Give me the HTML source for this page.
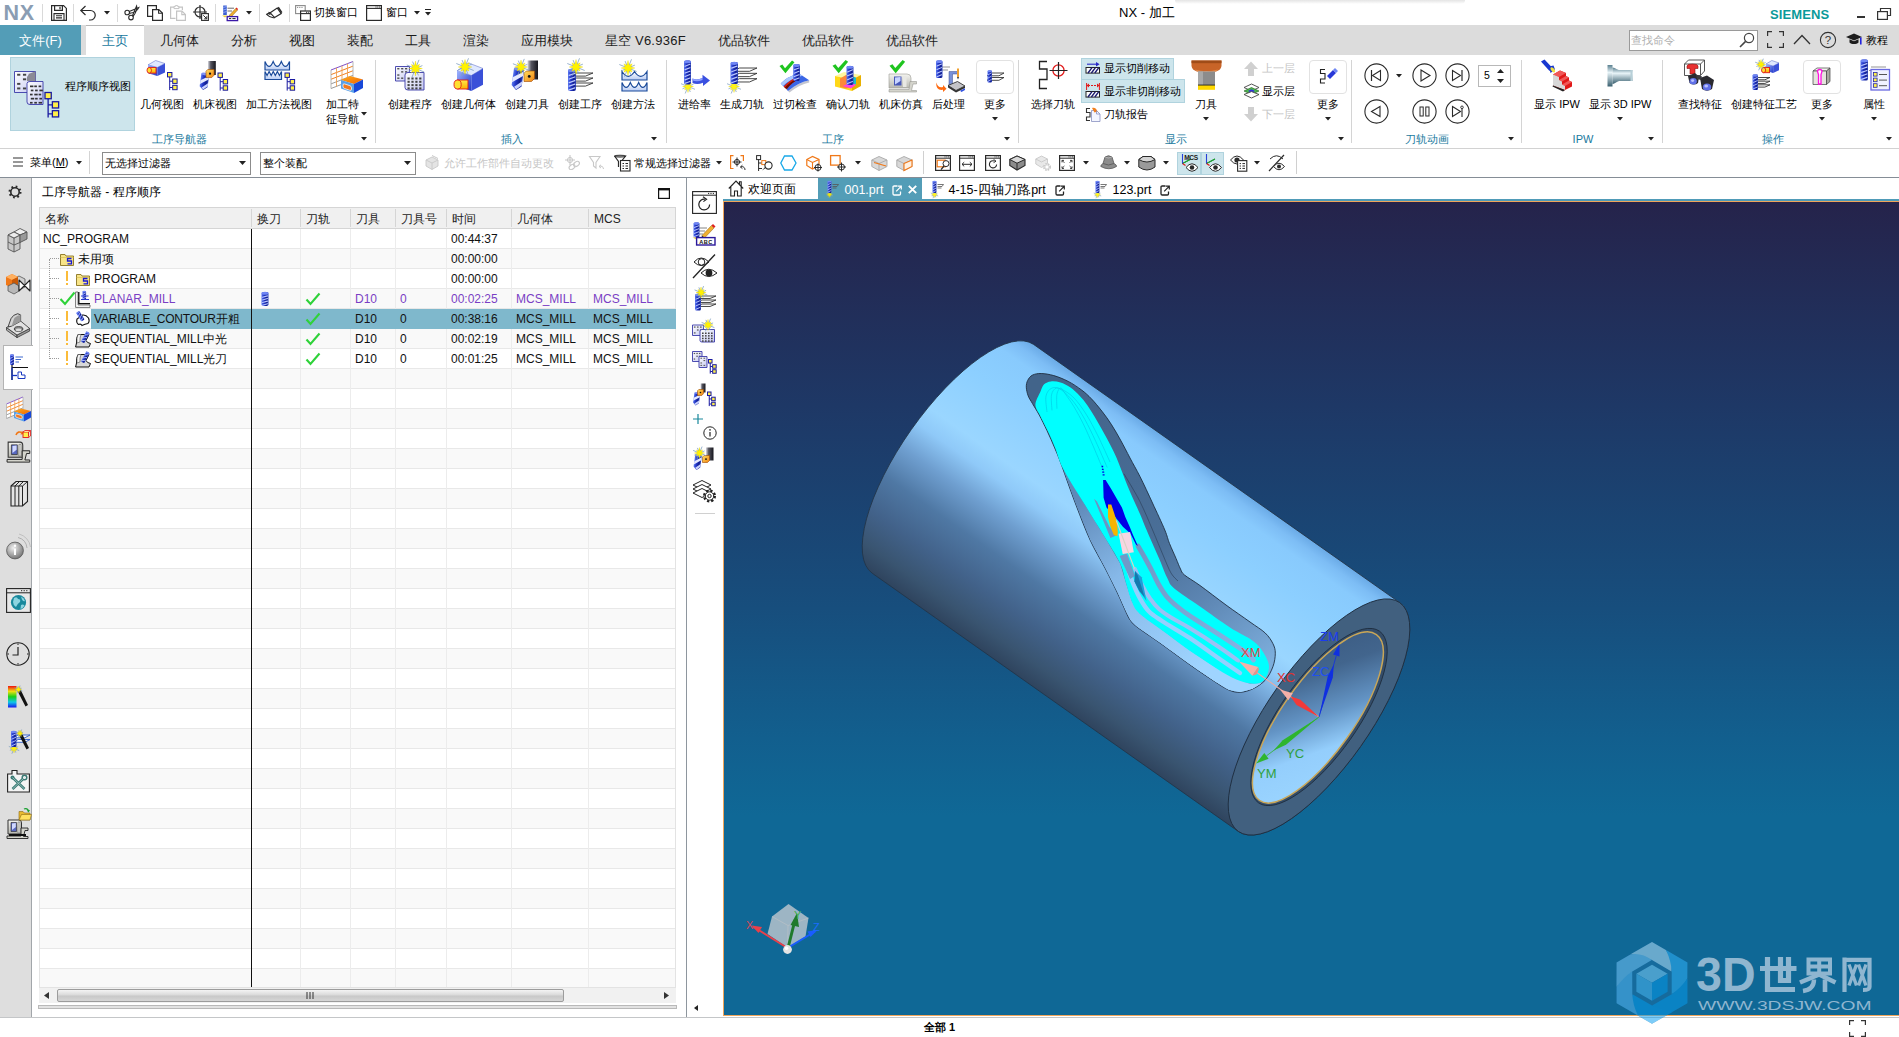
<!DOCTYPE html>
<html lang="zh"><head><meta charset="utf-8"><title>NX - 加工</title>
<style>
*{box-sizing:border-box;margin:0;padding:0}
html,body{width:1899px;height:1037px;overflow:hidden;background:#fff}
body{font-family:"Liberation Sans",sans-serif;font-size:12px;color:#000;position:relative}
.a{position:absolute}
.cj{display:inline-block;text-align:justify;text-align-last:justify;white-space:nowrap;vertical-align:top;height:100%}
svg{overflow:visible}
</style></head><body>
<div class="a" style="top:-0.25px;height:27px;line-height:27px;font-size:21.5px;color:#8a9db3;white-space:nowrap;font-weight:bold;letter-spacing:0.8px;left:3.5px;">NX</div>
<div class="a" style="left:42px;top:4px;width:1px;height:18px;background:#d9d9d9;"></div>
<div class="a" style="left:73px;top:4px;width:1px;height:18px;background:#d9d9d9;"></div>
<div class="a" style="left:117px;top:4px;width:1px;height:18px;background:#d9d9d9;"></div>
<div class="a" style="left:215px;top:4px;width:1px;height:18px;background:#d9d9d9;"></div>
<div class="a" style="left:259px;top:4px;width:1px;height:18px;background:#d9d9d9;"></div>
<div class="a" style="left:289px;top:4px;width:1px;height:18px;background:#d9d9d9;"></div>
<div class="a" style="top:4px;height:17px;line-height:17px;font-size:11px;color:#000;white-space:nowrap;left:314px;"><span class="cj" style="width:44px">切换窗口</span></div>
<div class="a" style="top:4px;height:17px;line-height:17px;font-size:11px;color:#000;white-space:nowrap;left:386px;"><span class="cj" style="width:22px">窗口</span></div>
<svg class="a" style="left:104px;top:11px;" width="6" height="3.5" viewBox="0 0 6 3.5"><path d="M0 0H6L3 3.5Z" fill="#222"/></svg>
<svg class="a" style="left:246px;top:11px;" width="6" height="3.5" viewBox="0 0 6 3.5"><path d="M0 0H6L3 3.5Z" fill="#222"/></svg>
<svg class="a" style="left:414px;top:11px;" width="6" height="3.5" viewBox="0 0 6 3.5"><path d="M0 0H6L3 3.5Z" fill="#222"/></svg>
<svg class="a" style="left:425px;top:12px;" width="6" height="3.5" viewBox="0 0 6 3.5"><path d="M0 0H6L3 3.5Z" fill="#222"/></svg>
<div class="a" style="left:425px;top:9px;width:6px;height:1px;background:#222;"></div>
<div class="a" style="top:3px;height:19px;line-height:19px;font-size:13px;color:#000;white-space:nowrap;left:1119px;">NX - <span class="cj" style="width:26px">加工</span></div>
<div class="a" style="left:1175px;top:0px;width:290px;height:4px;background:linear-gradient(#e4e4e4,#fff);border-radius:0 0 6px 6px;"></div>
<div class="a" style="top:4.5px;height:19px;line-height:19px;font-size:13px;color:#0a9a9a;white-space:nowrap;font-weight:bold;letter-spacing:0.1px;left:1770px;">SIEMENS</div>
<div class="a" style="left:1857px;top:16px;width:8px;height:2px;background:#333;"></div>
<svg class="a" style="left:1877px;top:7.5px;" width="14" height="12" viewBox="0 0 14 12"><path d="M3.5 3.5V0.5H13.5V7.5H10.5" fill="none" stroke="#333" stroke-width="1.2"/><rect x="0.6" y="3.6" width="9.8" height="7.8" fill="#fff" stroke="#333" stroke-width="1.2"/></svg>
<div class="a" style="left:0px;top:25px;width:1899px;height:30px;background:#dcdcdc;"></div>
<div class="a" style="left:0px;top:25px;width:81px;height:30px;background:#539db7;"></div>
<div class="a" style="top:30.5px;height:19px;line-height:19px;font-size:13px;color:#fff;white-space:nowrap;left:-159.5px;width:400px;text-align:center;"><span class="cj" style="width:26px">文件</span>(F)</div>
<div class="a" style="left:86px;top:25px;width:58px;height:31px;background:#fff;border-top:1px solid #b5b5b5;"></div>
<div class="a" style="top:30.5px;height:19px;line-height:19px;font-size:13px;color:#1a7a9e;white-space:nowrap;left:-85px;width:400px;text-align:center;"><span class="cj" style="width:26px">主页</span></div>
<div class="a" style="top:30.5px;height:19px;line-height:19px;font-size:13px;color:#1a1a1a;white-space:nowrap;left:-20.5px;width:400px;text-align:center;"><span class="cj" style="width:39px">几何体</span></div>
<div class="a" style="top:30.5px;height:19px;line-height:19px;font-size:13px;color:#1a1a1a;white-space:nowrap;left:44px;width:400px;text-align:center;"><span class="cj" style="width:26px">分析</span></div>
<div class="a" style="top:30.5px;height:19px;line-height:19px;font-size:13px;color:#1a1a1a;white-space:nowrap;left:102px;width:400px;text-align:center;"><span class="cj" style="width:26px">视图</span></div>
<div class="a" style="top:30.5px;height:19px;line-height:19px;font-size:13px;color:#1a1a1a;white-space:nowrap;left:160px;width:400px;text-align:center;"><span class="cj" style="width:26px">装配</span></div>
<div class="a" style="top:30.5px;height:19px;line-height:19px;font-size:13px;color:#1a1a1a;white-space:nowrap;left:218px;width:400px;text-align:center;"><span class="cj" style="width:26px">工具</span></div>
<div class="a" style="top:30.5px;height:19px;line-height:19px;font-size:13px;color:#1a1a1a;white-space:nowrap;left:276px;width:400px;text-align:center;"><span class="cj" style="width:26px">渲染</span></div>
<div class="a" style="top:30.5px;height:19px;line-height:19px;font-size:13px;color:#1a1a1a;white-space:nowrap;left:347px;width:400px;text-align:center;"><span class="cj" style="width:52px">应用模块</span></div>
<div class="a" style="top:30.5px;height:19px;line-height:19px;font-size:13px;color:#1a1a1a;white-space:nowrap;letter-spacing:0.25px;left:445.5px;width:400px;text-align:center;"><span class="cj" style="width:26px">星空</span> V6.936F</div>
<div class="a" style="top:30.5px;height:19px;line-height:19px;font-size:13px;color:#1a1a1a;white-space:nowrap;left:544px;width:400px;text-align:center;"><span class="cj" style="width:52px">优品软件</span></div>
<div class="a" style="top:30.5px;height:19px;line-height:19px;font-size:13px;color:#1a1a1a;white-space:nowrap;left:628px;width:400px;text-align:center;"><span class="cj" style="width:52px">优品软件</span></div>
<div class="a" style="top:30.5px;height:19px;line-height:19px;font-size:13px;color:#1a1a1a;white-space:nowrap;left:712px;width:400px;text-align:center;"><span class="cj" style="width:52px">优品软件</span></div>
<div class="a" style="left:1629px;top:29.5px;width:129px;height:21px;background:#fff;border:1px solid #9a9a9a;"></div>
<div class="a" style="top:31.5px;height:17px;line-height:17px;font-size:11px;color:#b0b0b0;white-space:nowrap;left:1631px;"><span class="cj" style="width:44px">查找命令</span></div>
<svg class="a" style="left:1738px;top:31px;" width="18" height="18" viewBox="0 0 18 18"><circle cx="11" cy="7" r="4.6" fill="none" stroke="#444" stroke-width="1.2"/><path d="M7.6 10.4L2 16" stroke="#444" stroke-width="1.6"/></svg>
<svg class="a" style="left:1767px;top:31px;" width="17" height="17" viewBox="0 0 17 17"><path d="M0.6 5V0.6H5M12 0.6H16.4V5M16.4 12V16.4H12M5 16.4H0.6V12" fill="none" stroke="#333" stroke-width="1.2"/></svg>
<svg class="a" style="left:1793px;top:34px;" width="18" height="11" viewBox="0 0 18 11"><path d="M1 10L9 1.5L17 10" fill="none" stroke="#333" stroke-width="1.3"/></svg>
<svg class="a" style="left:1819px;top:31px;" width="18" height="18" viewBox="0 0 18 18"><circle cx="9" cy="9" r="7.6" fill="none" stroke="#333" stroke-width="1.1"/><text x="9" y="13.2" font-size="11.5" text-anchor="middle" font-family="Liberation Sans" fill="#333">?</text></svg>
<svg class="a" style="left:1846px;top:33px;" width="17" height="13" viewBox="0 0 17 13"><path d="M0 4L8 0.5L16 4L8 7.5Z" fill="#1d1d1d"/><path d="M3.5 6.2V9.5C5.5 11.6 10.5 11.6 12.5 9.5V6.2L8 8.3Z" fill="#1d1d1d"/><path d="M14.8 4.6V11.5" stroke="#2222dd" stroke-width="1.6"/></svg>
<div class="a" style="top:31.5px;height:17px;line-height:17px;font-size:11px;color:#000;white-space:nowrap;left:1866px;"><span class="cj" style="width:22px">教程</span></div>
<div class="a" style="left:0px;top:148px;width:1899px;height:1px;background:#d2d2d2;"></div>
<div class="a" style="left:375px;top:60px;width:1px;height:83px;background:#d4d4d4;"></div>
<div class="a" style="left:666px;top:60px;width:1px;height:83px;background:#d4d4d4;"></div>
<div class="a" style="left:1018px;top:60px;width:1px;height:83px;background:#d4d4d4;"></div>
<div class="a" style="left:1351px;top:60px;width:1px;height:83px;background:#d4d4d4;"></div>
<div class="a" style="left:1521px;top:60px;width:1px;height:83px;background:#d4d4d4;"></div>
<div class="a" style="left:1662px;top:60px;width:1px;height:83px;background:#d4d4d4;"></div>
<div class="a" style="top:130.5px;height:17px;line-height:17px;font-size:11px;color:#1a7a9e;white-space:nowrap;left:-20.5px;width:400px;text-align:center;"><span class="cj" style="width:55px">工序导航器</span></div>
<svg class="a" style="left:361px;top:137px;" width="6" height="3.5" viewBox="0 0 6 3.5"><path d="M0 0H6L3 3.5Z" fill="#222"/></svg>
<div class="a" style="top:130.5px;height:17px;line-height:17px;font-size:11px;color:#1a7a9e;white-space:nowrap;left:312px;width:400px;text-align:center;"><span class="cj" style="width:22px">插入</span></div>
<svg class="a" style="left:651px;top:137px;" width="6" height="3.5" viewBox="0 0 6 3.5"><path d="M0 0H6L3 3.5Z" fill="#222"/></svg>
<div class="a" style="top:130.5px;height:17px;line-height:17px;font-size:11px;color:#1a7a9e;white-space:nowrap;left:633px;width:400px;text-align:center;"><span class="cj" style="width:22px">工序</span></div>
<svg class="a" style="left:1004px;top:137px;" width="6" height="3.5" viewBox="0 0 6 3.5"><path d="M0 0H6L3 3.5Z" fill="#222"/></svg>
<div class="a" style="top:130.5px;height:17px;line-height:17px;font-size:11px;color:#1a7a9e;white-space:nowrap;left:976px;width:400px;text-align:center;"><span class="cj" style="width:22px">显示</span></div>
<svg class="a" style="left:1337.5px;top:137px;" width="6" height="3.5" viewBox="0 0 6 3.5"><path d="M0 0H6L3 3.5Z" fill="#222"/></svg>
<div class="a" style="top:130.5px;height:17px;line-height:17px;font-size:11px;color:#1a7a9e;white-space:nowrap;left:1227px;width:400px;text-align:center;"><span class="cj" style="width:44px">刀轨动画</span></div>
<svg class="a" style="left:1507.5px;top:137px;" width="6" height="3.5" viewBox="0 0 6 3.5"><path d="M0 0H6L3 3.5Z" fill="#222"/></svg>
<div class="a" style="top:130.5px;height:17px;line-height:17px;font-size:11px;color:#1a7a9e;white-space:nowrap;left:1383px;width:400px;text-align:center;">IPW</div>
<svg class="a" style="left:1648px;top:137px;" width="6" height="3.5" viewBox="0 0 6 3.5"><path d="M0 0H6L3 3.5Z" fill="#222"/></svg>
<div class="a" style="top:130.5px;height:17px;line-height:17px;font-size:11px;color:#1a7a9e;white-space:nowrap;left:1573px;width:400px;text-align:center;"><span class="cj" style="width:22px">操作</span></div>
<svg class="a" style="left:1886px;top:137px;" width="6" height="3.5" viewBox="0 0 6 3.5"><path d="M0 0H6L3 3.5Z" fill="#222"/></svg>
<div class="a" style="left:10px;top:57px;width:125px;height:74px;background:#cde5ec;border:1px solid #b0d3de;"></div>
<div class="a" style="top:77.5px;height:17px;line-height:17px;font-size:11px;color:#000;white-space:nowrap;left:65px;"><span class="cj" style="width:66px">程序顺序视图</span></div>
<div class="a" style="top:95.5px;height:17px;line-height:17px;font-size:11px;color:#000;white-space:nowrap;left:-38px;width:400px;text-align:center;"><span class="cj" style="width:44px">几何视图</span></div>
<div class="a" style="top:95.5px;height:17px;line-height:17px;font-size:11px;color:#000;white-space:nowrap;left:15px;width:400px;text-align:center;"><span class="cj" style="width:44px">机床视图</span></div>
<div class="a" style="top:95.5px;height:17px;line-height:17px;font-size:11px;color:#000;white-space:nowrap;left:79px;width:400px;text-align:center;"><span class="cj" style="width:66px">加工方法视图</span></div>
<div class="a" style="top:95.5px;height:17px;line-height:17px;font-size:11px;color:#000;white-space:nowrap;left:210px;width:400px;text-align:center;"><span class="cj" style="width:44px">创建程序</span></div>
<div class="a" style="top:95.5px;height:17px;line-height:17px;font-size:11px;color:#000;white-space:nowrap;left:268.5px;width:400px;text-align:center;"><span class="cj" style="width:55px">创建几何体</span></div>
<div class="a" style="top:95.5px;height:17px;line-height:17px;font-size:11px;color:#000;white-space:nowrap;left:327px;width:400px;text-align:center;"><span class="cj" style="width:44px">创建刀具</span></div>
<div class="a" style="top:95.5px;height:17px;line-height:17px;font-size:11px;color:#000;white-space:nowrap;left:380px;width:400px;text-align:center;"><span class="cj" style="width:44px">创建工序</span></div>
<div class="a" style="top:95.5px;height:17px;line-height:17px;font-size:11px;color:#000;white-space:nowrap;left:433px;width:400px;text-align:center;"><span class="cj" style="width:44px">创建方法</span></div>
<div class="a" style="top:95.5px;height:17px;line-height:17px;font-size:11px;color:#000;white-space:nowrap;left:494.5px;width:400px;text-align:center;"><span class="cj" style="width:33px">进给率</span></div>
<div class="a" style="top:95.5px;height:17px;line-height:17px;font-size:11px;color:#000;white-space:nowrap;left:542px;width:400px;text-align:center;"><span class="cj" style="width:44px">生成刀轨</span></div>
<div class="a" style="top:95.5px;height:17px;line-height:17px;font-size:11px;color:#000;white-space:nowrap;left:595px;width:400px;text-align:center;"><span class="cj" style="width:44px">过切检查</span></div>
<div class="a" style="top:95.5px;height:17px;line-height:17px;font-size:11px;color:#000;white-space:nowrap;left:648px;width:400px;text-align:center;"><span class="cj" style="width:44px">确认刀轨</span></div>
<div class="a" style="top:95.5px;height:17px;line-height:17px;font-size:11px;color:#000;white-space:nowrap;left:701px;width:400px;text-align:center;"><span class="cj" style="width:44px">机床仿真</span></div>
<div class="a" style="top:95.5px;height:17px;line-height:17px;font-size:11px;color:#000;white-space:nowrap;left:748.5px;width:400px;text-align:center;"><span class="cj" style="width:33px">后处理</span></div>
<div class="a" style="top:95.5px;height:17px;line-height:17px;font-size:11px;color:#000;white-space:nowrap;left:795px;width:400px;text-align:center;"><span class="cj" style="width:22px">更多</span></div>
<div class="a" style="top:95.5px;height:17px;line-height:17px;font-size:11px;color:#000;white-space:nowrap;left:853px;width:400px;text-align:center;"><span class="cj" style="width:44px">选择刀轨</span></div>
<div class="a" style="top:95.5px;height:17px;line-height:17px;font-size:11px;color:#000;white-space:nowrap;left:1006px;width:400px;text-align:center;"><span class="cj" style="width:22px">刀具</span></div>
<div class="a" style="top:95.5px;height:17px;line-height:17px;font-size:11px;color:#000;white-space:nowrap;left:1128px;width:400px;text-align:center;"><span class="cj" style="width:22px">更多</span></div>
<div class="a" style="top:95.5px;height:17px;line-height:17px;font-size:11px;color:#000;white-space:nowrap;left:1357px;width:400px;text-align:center;"><span class="cj" style="width:22px">显示</span> IPW</div>
<div class="a" style="top:95.5px;height:17px;line-height:17px;font-size:11px;color:#000;white-space:nowrap;left:1420px;width:400px;text-align:center;"><span class="cj" style="width:22px">显示</span> 3D IPW</div>
<div class="a" style="top:95.5px;height:17px;line-height:17px;font-size:11px;color:#000;white-space:nowrap;left:1500px;width:400px;text-align:center;"><span class="cj" style="width:44px">查找特征</span></div>
<div class="a" style="top:95.5px;height:17px;line-height:17px;font-size:11px;color:#000;white-space:nowrap;left:1564px;width:400px;text-align:center;"><span class="cj" style="width:66px">创建特征工艺</span></div>
<div class="a" style="top:95.5px;height:17px;line-height:17px;font-size:11px;color:#000;white-space:nowrap;left:1622px;width:400px;text-align:center;"><span class="cj" style="width:22px">更多</span></div>
<div class="a" style="top:95.5px;height:17px;line-height:17px;font-size:11px;color:#000;white-space:nowrap;left:1674px;width:400px;text-align:center;"><span class="cj" style="width:22px">属性</span></div>
<div class="a" style="top:95.5px;height:17px;line-height:17px;font-size:11px;color:#000;white-space:nowrap;left:142.5px;width:400px;text-align:center;"><span class="cj" style="width:33px">加工特</span></div>
<div class="a" style="top:110.5px;height:17px;line-height:17px;font-size:11px;color:#000;white-space:nowrap;left:142.5px;width:400px;text-align:center;"><span class="cj" style="width:33px">征导航</span></div>
<svg class="a" style="left:361px;top:112px;" width="6" height="3.5" viewBox="0 0 6 3.5"><path d="M0 0H6L3 3.5Z" fill="#222"/></svg>
<svg class="a" style="left:992px;top:117px;" width="6" height="3.5" viewBox="0 0 6 3.5"><path d="M0 0H6L3 3.5Z" fill="#222"/></svg>
<svg class="a" style="left:1203px;top:117px;" width="6" height="3.5" viewBox="0 0 6 3.5"><path d="M0 0H6L3 3.5Z" fill="#222"/></svg>
<svg class="a" style="left:1325px;top:117px;" width="6" height="3.5" viewBox="0 0 6 3.5"><path d="M0 0H6L3 3.5Z" fill="#222"/></svg>
<svg class="a" style="left:1617px;top:117px;" width="6" height="3.5" viewBox="0 0 6 3.5"><path d="M0 0H6L3 3.5Z" fill="#222"/></svg>
<svg class="a" style="left:1819px;top:117px;" width="6" height="3.5" viewBox="0 0 6 3.5"><path d="M0 0H6L3 3.5Z" fill="#222"/></svg>
<svg class="a" style="left:1871px;top:117px;" width="6" height="3.5" viewBox="0 0 6 3.5"><path d="M0 0H6L3 3.5Z" fill="#222"/></svg>
<div class="a" style="left:976px;top:59.5px;width:37.5px;height:34px;border:1px solid #e2e2e2;border-radius:4px;"></div>
<div class="a" style="left:1309px;top:59.5px;width:37.5px;height:34px;border:1px solid #e2e2e2;border-radius:4px;"></div>
<div class="a" style="left:1803px;top:59.5px;width:37.5px;height:34px;border:1px solid #e2e2e2;border-radius:4px;"></div>
<div class="a" style="left:1081px;top:57.5px;width:93px;height:22px;background:#cde5ec;border:1px solid #b0d3de;"></div>
<div class="a" style="left:1081px;top:79px;width:104px;height:23.5px;background:#cde5ec;border:1px solid #b0d3de;"></div>
<div class="a" style="top:60px;height:17px;line-height:17px;font-size:11px;color:#000;white-space:nowrap;left:1104px;"><span class="cj" style="width:66px">显示切削移动</span></div>
<div class="a" style="top:82.5px;height:17px;line-height:17px;font-size:11px;color:#000;white-space:nowrap;left:1104px;"><span class="cj" style="width:77px">显示非切削移动</span></div>
<div class="a" style="top:105.5px;height:17px;line-height:17px;font-size:11px;color:#000;white-space:nowrap;left:1104px;"><span class="cj" style="width:44px">刀轨报告</span></div>
<div class="a" style="top:60px;height:17px;line-height:17px;font-size:11px;color:#c4c4c4;white-space:nowrap;left:1262px;"><span class="cj" style="width:33px">上一层</span></div>
<div class="a" style="top:82.5px;height:17px;line-height:17px;font-size:11px;color:#000;white-space:nowrap;left:1262px;"><span class="cj" style="width:33px">显示层</span></div>
<div class="a" style="top:105.5px;height:17px;line-height:17px;font-size:11px;color:#c4c4c4;white-space:nowrap;left:1262px;"><span class="cj" style="width:33px">下一层</span></div>
<div class="a" style="left:1478px;top:65px;width:33px;height:22px;background:#fff;border:1px solid #b8b8b8;"></div>
<div class="a" style="top:66.75px;height:16px;line-height:16px;font-size:10.5px;color:#000;white-space:nowrap;left:1484px;">5</div>
<svg class="a" style="left:1497px;top:69px;" width="7" height="14" viewBox="0 0 7 14"><path d="M0 4L3.5 0L7 4ZM0 10L3.5 14L7 10Z" fill="#222"/></svg>
<div class="a" style="left:0px;top:177px;width:1899px;height:1px;background:#858d96;"></div>
<svg class="a" style="left:13px;top:157px;" width="11" height="10" viewBox="0 0 11 10"><path d="M0 1H10M0 5H10M0 9H10" stroke="#333" stroke-width="1.1"/></svg>
<div class="a" style="left:30px;top:153px;height:18px;line-height:18px;font-size:11px;white-space:nowrap"><span class="cj" style="width:22px">菜单</span>(<u>M</u>)</div>
<svg class="a" style="left:75.5px;top:160.5px;" width="6" height="3.5" viewBox="0 0 6 3.5"><path d="M0 0H6L3 3.5Z" fill="#222"/></svg>
<div class="a" style="left:89px;top:151px;width:1px;height:23px;background:#d4d4d4;"></div>
<div class="a" style="left:102px;top:151.5px;width:149px;height:23px;background:#fff;border:1px solid #8c8c8c;"></div>
<div class="a" style="top:154.5px;height:17px;line-height:17px;font-size:11px;color:#000;white-space:nowrap;left:105px;"><span class="cj" style="width:66px">无选择过滤器</span></div>
<svg class="a" style="left:238.5px;top:161px;" width="7" height="4" viewBox="0 0 7 4"><path d="M0 0H7L3.5 4Z" fill="#222"/></svg>
<div class="a" style="left:260px;top:151.5px;width:156px;height:23px;background:#fff;border:1px solid #8c8c8c;"></div>
<div class="a" style="top:154.5px;height:17px;line-height:17px;font-size:11px;color:#000;white-space:nowrap;left:263px;"><span class="cj" style="width:44px">整个装配</span></div>
<svg class="a" style="left:403.5px;top:161px;" width="7" height="4" viewBox="0 0 7 4"><path d="M0 0H7L3.5 4Z" fill="#222"/></svg>
<div class="a" style="top:154.5px;height:17px;line-height:17px;font-size:11px;color:#c6c6c6;white-space:nowrap;left:444px;"><span class="cj" style="width:110px">允许工作部件自动更改</span></div>
<div class="a" style="top:154.5px;height:17px;line-height:17px;font-size:11px;color:#000;white-space:nowrap;left:634px;"><span class="cj" style="width:77px">常规选择过滤器</span></div>
<svg class="a" style="left:715.5px;top:161px;" width="6" height="3.5" viewBox="0 0 6 3.5"><path d="M0 0H6L3 3.5Z" fill="#222"/></svg>
<svg class="a" style="left:855px;top:161px;" width="6" height="3.5" viewBox="0 0 6 3.5"><path d="M0 0H6L3 3.5Z" fill="#222"/></svg>
<svg class="a" style="left:1083px;top:161px;" width="6" height="3.5" viewBox="0 0 6 3.5"><path d="M0 0H6L3 3.5Z" fill="#222"/></svg>
<svg class="a" style="left:1124px;top:161px;" width="6" height="3.5" viewBox="0 0 6 3.5"><path d="M0 0H6L3 3.5Z" fill="#222"/></svg>
<svg class="a" style="left:1163px;top:161px;" width="6" height="3.5" viewBox="0 0 6 3.5"><path d="M0 0H6L3 3.5Z" fill="#222"/></svg>
<svg class="a" style="left:1254px;top:161px;" width="6" height="3.5" viewBox="0 0 6 3.5"><path d="M0 0H6L3 3.5Z" fill="#222"/></svg>
<div class="a" style="left:922.5px;top:151px;width:1px;height:23px;background:#d0d0d0;"></div>
<div class="a" style="left:1296px;top:151px;width:1px;height:23px;background:#d0d0d0;"></div>
<div class="a" style="left:1177px;top:151.5px;width:23.5px;height:23px;background:#cde5ec;border:1px solid #b0d3de;"></div>
<div class="a" style="left:1200.5px;top:151.5px;width:23.5px;height:23px;background:#cde5ec;border:1px solid #b0d3de;"></div>
<div class="a" style="left:0px;top:178px;width:31px;height:838.5px;background:#dedede;"></div>
<div class="a" style="left:31px;top:178px;width:1px;height:838.5px;background:#a2a6aa;"></div>
<div class="a" style="left:3px;top:345px;width:29.5px;height:45px;background:#fff;border:1px solid #b4b4b4;border-right:none;"></div>
<div class="a" style="top:183px;height:18px;line-height:18px;font-size:12px;color:#000;white-space:nowrap;left:42px;"><span class="cj" style="width:60px">工序导航器</span> - <span class="cj" style="width:48px">程序顺序</span></div>
<svg class="a" style="left:658px;top:188px;" width="12" height="11" viewBox="0 0 12 11"><rect x="0.6" y="0.6" width="10.8" height="9.8" fill="#fff" stroke="#111" stroke-width="1.2"/><path d="M0 1.2H12" stroke="#111" stroke-width="2.4"/></svg>
<div class="a" style="left:39px;top:208px;width:637px;height:780px;background:#fff;border:1px solid #e3e3e3;border-top:none;"></div>
<div class="a" style="left:40px;top:248px;width:635px;height:20px;background:#f9f9f9;"></div>
<div class="a" style="left:40px;top:288px;width:635px;height:20px;background:#f9f9f9;"></div>
<div class="a" style="left:40px;top:328px;width:635px;height:20px;background:#f9f9f9;"></div>
<div class="a" style="left:40px;top:368px;width:635px;height:20px;background:#f9f9f9;"></div>
<div class="a" style="left:40px;top:408px;width:635px;height:20px;background:#f9f9f9;"></div>
<div class="a" style="left:40px;top:448px;width:635px;height:20px;background:#f9f9f9;"></div>
<div class="a" style="left:40px;top:488px;width:635px;height:20px;background:#f9f9f9;"></div>
<div class="a" style="left:40px;top:528px;width:635px;height:20px;background:#f9f9f9;"></div>
<div class="a" style="left:40px;top:568px;width:635px;height:20px;background:#f9f9f9;"></div>
<div class="a" style="left:40px;top:608px;width:635px;height:20px;background:#f9f9f9;"></div>
<div class="a" style="left:40px;top:648px;width:635px;height:20px;background:#f9f9f9;"></div>
<div class="a" style="left:40px;top:688px;width:635px;height:20px;background:#f9f9f9;"></div>
<div class="a" style="left:40px;top:728px;width:635px;height:20px;background:#f9f9f9;"></div>
<div class="a" style="left:40px;top:768px;width:635px;height:20px;background:#f9f9f9;"></div>
<div class="a" style="left:40px;top:808px;width:635px;height:20px;background:#f9f9f9;"></div>
<div class="a" style="left:40px;top:848px;width:635px;height:20px;background:#f9f9f9;"></div>
<div class="a" style="left:40px;top:888px;width:635px;height:20px;background:#f9f9f9;"></div>
<div class="a" style="left:40px;top:928px;width:635px;height:20px;background:#f9f9f9;"></div>
<div class="a" style="left:40px;top:968px;width:635px;height:19px;background:#f9f9f9;"></div>
<div class="a" style="left:40px;top:247.5px;width:635px;height:1px;background:#e8e8e8;"></div>
<div class="a" style="left:40px;top:267.5px;width:635px;height:1px;background:#e8e8e8;"></div>
<div class="a" style="left:40px;top:287.5px;width:635px;height:1px;background:#e8e8e8;"></div>
<div class="a" style="left:40px;top:307.5px;width:635px;height:1px;background:#e8e8e8;"></div>
<div class="a" style="left:40px;top:327.5px;width:635px;height:1px;background:#e8e8e8;"></div>
<div class="a" style="left:40px;top:347.5px;width:635px;height:1px;background:#e8e8e8;"></div>
<div class="a" style="left:40px;top:367.5px;width:635px;height:1px;background:#e8e8e8;"></div>
<div class="a" style="left:40px;top:387.5px;width:635px;height:1px;background:#e8e8e8;"></div>
<div class="a" style="left:40px;top:407.5px;width:635px;height:1px;background:#e8e8e8;"></div>
<div class="a" style="left:40px;top:427.5px;width:635px;height:1px;background:#e8e8e8;"></div>
<div class="a" style="left:40px;top:447.5px;width:635px;height:1px;background:#e8e8e8;"></div>
<div class="a" style="left:40px;top:467.5px;width:635px;height:1px;background:#e8e8e8;"></div>
<div class="a" style="left:40px;top:487.5px;width:635px;height:1px;background:#e8e8e8;"></div>
<div class="a" style="left:40px;top:507.5px;width:635px;height:1px;background:#e8e8e8;"></div>
<div class="a" style="left:40px;top:527.5px;width:635px;height:1px;background:#e8e8e8;"></div>
<div class="a" style="left:40px;top:547.5px;width:635px;height:1px;background:#e8e8e8;"></div>
<div class="a" style="left:40px;top:567.5px;width:635px;height:1px;background:#e8e8e8;"></div>
<div class="a" style="left:40px;top:587.5px;width:635px;height:1px;background:#e8e8e8;"></div>
<div class="a" style="left:40px;top:607.5px;width:635px;height:1px;background:#e8e8e8;"></div>
<div class="a" style="left:40px;top:627.5px;width:635px;height:1px;background:#e8e8e8;"></div>
<div class="a" style="left:40px;top:647.5px;width:635px;height:1px;background:#e8e8e8;"></div>
<div class="a" style="left:40px;top:667.5px;width:635px;height:1px;background:#e8e8e8;"></div>
<div class="a" style="left:40px;top:687.5px;width:635px;height:1px;background:#e8e8e8;"></div>
<div class="a" style="left:40px;top:707.5px;width:635px;height:1px;background:#e8e8e8;"></div>
<div class="a" style="left:40px;top:727.5px;width:635px;height:1px;background:#e8e8e8;"></div>
<div class="a" style="left:40px;top:747.5px;width:635px;height:1px;background:#e8e8e8;"></div>
<div class="a" style="left:40px;top:767.5px;width:635px;height:1px;background:#e8e8e8;"></div>
<div class="a" style="left:40px;top:787.5px;width:635px;height:1px;background:#e8e8e8;"></div>
<div class="a" style="left:40px;top:807.5px;width:635px;height:1px;background:#e8e8e8;"></div>
<div class="a" style="left:40px;top:827.5px;width:635px;height:1px;background:#e8e8e8;"></div>
<div class="a" style="left:40px;top:847.5px;width:635px;height:1px;background:#e8e8e8;"></div>
<div class="a" style="left:40px;top:867.5px;width:635px;height:1px;background:#e8e8e8;"></div>
<div class="a" style="left:40px;top:887.5px;width:635px;height:1px;background:#e8e8e8;"></div>
<div class="a" style="left:40px;top:907.5px;width:635px;height:1px;background:#e8e8e8;"></div>
<div class="a" style="left:40px;top:927.5px;width:635px;height:1px;background:#e8e8e8;"></div>
<div class="a" style="left:40px;top:947.5px;width:635px;height:1px;background:#e8e8e8;"></div>
<div class="a" style="left:40px;top:967.5px;width:635px;height:1px;background:#e8e8e8;"></div>
<div class="a" style="left:300px;top:228px;width:1px;height:759px;background:#ececec;"></div>
<div class="a" style="left:350px;top:228px;width:1px;height:759px;background:#ececec;"></div>
<div class="a" style="left:395px;top:228px;width:1px;height:759px;background:#ececec;"></div>
<div class="a" style="left:446px;top:228px;width:1px;height:759px;background:#ececec;"></div>
<div class="a" style="left:511px;top:228px;width:1px;height:759px;background:#ececec;"></div>
<div class="a" style="left:588px;top:228px;width:1px;height:759px;background:#ececec;"></div>
<div class="a" style="left:91px;top:309px;width:585px;height:19.5px;background:#7fb8cc;"></div>
<div class="a" style="left:251px;top:228px;width:1px;height:759px;background:#111;"></div>
<div class="a" style="left:39px;top:206.5px;width:637px;height:22px;background:#f0f0f0;border:1px solid #d5d5d5;"></div>
<div class="a" style="left:251px;top:209px;width:1px;height:18px;background:#d5d5d5;"></div>
<div class="a" style="left:300px;top:209px;width:1px;height:18px;background:#d5d5d5;"></div>
<div class="a" style="left:350px;top:209px;width:1px;height:18px;background:#d5d5d5;"></div>
<div class="a" style="left:395px;top:209px;width:1px;height:18px;background:#d5d5d5;"></div>
<div class="a" style="left:446px;top:209px;width:1px;height:18px;background:#d5d5d5;"></div>
<div class="a" style="left:511px;top:209px;width:1px;height:18px;background:#d5d5d5;"></div>
<div class="a" style="left:588px;top:209px;width:1px;height:18px;background:#d5d5d5;"></div>
<div class="a" style="top:209.6px;height:18px;line-height:18px;font-size:12px;color:#222;white-space:nowrap;left:45px;"><span class="cj" style="width:24px">名称</span></div>
<div class="a" style="top:209.6px;height:18px;line-height:18px;font-size:12px;color:#222;white-space:nowrap;left:257px;"><span class="cj" style="width:24px">换刀</span></div>
<div class="a" style="top:209.6px;height:18px;line-height:18px;font-size:12px;color:#222;white-space:nowrap;left:306px;"><span class="cj" style="width:24px">刀轨</span></div>
<div class="a" style="top:209.6px;height:18px;line-height:18px;font-size:12px;color:#222;white-space:nowrap;left:356px;"><span class="cj" style="width:24px">刀具</span></div>
<div class="a" style="top:209.6px;height:18px;line-height:18px;font-size:12px;color:#222;white-space:nowrap;left:401px;"><span class="cj" style="width:36px">刀具号</span></div>
<div class="a" style="top:209.6px;height:18px;line-height:18px;font-size:12px;color:#222;white-space:nowrap;left:452px;"><span class="cj" style="width:24px">时间</span></div>
<div class="a" style="top:209.6px;height:18px;line-height:18px;font-size:12px;color:#222;white-space:nowrap;left:517px;"><span class="cj" style="width:36px">几何体</span></div>
<div class="a" style="top:209.6px;height:18px;line-height:18px;font-size:12px;color:#222;white-space:nowrap;left:594px;">MCS</div>
<div class="a" style="top:229.5px;height:18px;line-height:18px;font-size:12px;color:#111;white-space:nowrap;left:43px;">NC_PROGRAM</div>
<div class="a" style="top:229.5px;height:18px;line-height:18px;font-size:12px;color:#111;white-space:nowrap;left:451px;">00:44:37</div>
<div class="a" style="top:249.5px;height:18px;line-height:18px;font-size:12px;color:#111;white-space:nowrap;left:78px;"><span class="cj" style="width:36px">未用项</span></div>
<div class="a" style="top:249.5px;height:18px;line-height:18px;font-size:12px;color:#111;white-space:nowrap;left:451px;">00:00:00</div>
<div class="a" style="top:269.5px;height:18px;line-height:18px;font-size:12px;color:#111;white-space:nowrap;left:94px;">PROGRAM</div>
<div class="a" style="top:269.5px;height:18px;line-height:18px;font-size:12px;color:#111;white-space:nowrap;left:451px;">00:00:00</div>
<div class="a" style="top:289.5px;height:18px;line-height:18px;font-size:12px;color:#7a3fc4;white-space:nowrap;left:94px;">PLANAR_MILL</div>
<div class="a" style="top:289.5px;height:18px;line-height:18px;font-size:12px;color:#7a3fc4;white-space:nowrap;left:355px;">D10</div>
<div class="a" style="top:289.5px;height:18px;line-height:18px;font-size:12px;color:#7a3fc4;white-space:nowrap;left:400px;">0</div>
<div class="a" style="top:289.5px;height:18px;line-height:18px;font-size:12px;color:#7a3fc4;white-space:nowrap;left:516px;">MCS_MILL</div>
<div class="a" style="top:289.5px;height:18px;line-height:18px;font-size:12px;color:#7a3fc4;white-space:nowrap;left:593px;">MCS_MILL</div>
<div class="a" style="top:289.5px;height:18px;line-height:18px;font-size:12px;color:#7a3fc4;white-space:nowrap;left:451px;">00:02:25</div>
<svg class="a" style="left:305px;top:292px;" width="16" height="14" viewBox="0 0 16 14"><path d="M1.5 7.5L5.5 12L14.5 1.5" fill="none" stroke="#2fd23a" stroke-width="2.1"/></svg>
<div class="a" style="top:309.5px;height:18px;line-height:18px;font-size:12px;color:#111;white-space:nowrap;letter-spacing:-0.2px;left:94px;">VARIABLE_CONTOUR<span class="cj" style="width:24px">开粗</span></div>
<div class="a" style="top:309.5px;height:18px;line-height:18px;font-size:12px;color:#111;white-space:nowrap;left:355px;">D10</div>
<div class="a" style="top:309.5px;height:18px;line-height:18px;font-size:12px;color:#111;white-space:nowrap;left:400px;">0</div>
<div class="a" style="top:309.5px;height:18px;line-height:18px;font-size:12px;color:#111;white-space:nowrap;left:516px;">MCS_MILL</div>
<div class="a" style="top:309.5px;height:18px;line-height:18px;font-size:12px;color:#111;white-space:nowrap;left:593px;">MCS_MILL</div>
<div class="a" style="top:309.5px;height:18px;line-height:18px;font-size:12px;color:#111;white-space:nowrap;left:451px;">00:38:16</div>
<svg class="a" style="left:305px;top:312px;" width="16" height="14" viewBox="0 0 16 14"><path d="M1.5 7.5L5.5 12L14.5 1.5" fill="none" stroke="#2fd23a" stroke-width="2.1"/></svg>
<div class="a" style="top:329.5px;height:18px;line-height:18px;font-size:12px;color:#111;white-space:nowrap;left:94px;">SEQUENTIAL_MILL<span class="cj" style="width:24px">中光</span></div>
<div class="a" style="top:329.5px;height:18px;line-height:18px;font-size:12px;color:#111;white-space:nowrap;left:355px;">D10</div>
<div class="a" style="top:329.5px;height:18px;line-height:18px;font-size:12px;color:#111;white-space:nowrap;left:400px;">0</div>
<div class="a" style="top:329.5px;height:18px;line-height:18px;font-size:12px;color:#111;white-space:nowrap;left:516px;">MCS_MILL</div>
<div class="a" style="top:329.5px;height:18px;line-height:18px;font-size:12px;color:#111;white-space:nowrap;left:593px;">MCS_MILL</div>
<div class="a" style="top:329.5px;height:18px;line-height:18px;font-size:12px;color:#111;white-space:nowrap;left:451px;">00:02:19</div>
<svg class="a" style="left:305px;top:332px;" width="16" height="14" viewBox="0 0 16 14"><path d="M1.5 7.5L5.5 12L14.5 1.5" fill="none" stroke="#2fd23a" stroke-width="2.1"/></svg>
<div class="a" style="top:349.5px;height:18px;line-height:18px;font-size:12px;color:#111;white-space:nowrap;left:94px;">SEQUENTIAL_MILL<span class="cj" style="width:24px">光刀</span></div>
<div class="a" style="top:349.5px;height:18px;line-height:18px;font-size:12px;color:#111;white-space:nowrap;left:355px;">D10</div>
<div class="a" style="top:349.5px;height:18px;line-height:18px;font-size:12px;color:#111;white-space:nowrap;left:400px;">0</div>
<div class="a" style="top:349.5px;height:18px;line-height:18px;font-size:12px;color:#111;white-space:nowrap;left:516px;">MCS_MILL</div>
<div class="a" style="top:349.5px;height:18px;line-height:18px;font-size:12px;color:#111;white-space:nowrap;left:593px;">MCS_MILL</div>
<div class="a" style="top:349.5px;height:18px;line-height:18px;font-size:12px;color:#111;white-space:nowrap;left:451px;">00:01:25</div>
<svg class="a" style="left:305px;top:352px;" width="16" height="14" viewBox="0 0 16 14"><path d="M1.5 7.5L5.5 12L14.5 1.5" fill="none" stroke="#2fd23a" stroke-width="2.1"/></svg>
<div class="a" style="left:49px;top:259px;width:1px;height:100px;border-left:1px dotted #9a9a9a;"></div>
<div class="a" style="left:50px;top:258px;width:9px;height:1px;border-top:1px dotted #9a9a9a;"></div>
<div class="a" style="left:50px;top:278px;width:9px;height:1px;border-top:1px dotted #9a9a9a;"></div>
<div class="a" style="left:50px;top:298px;width:9px;height:1px;border-top:1px dotted #9a9a9a;"></div>
<div class="a" style="left:50px;top:318px;width:9px;height:1px;border-top:1px dotted #9a9a9a;"></div>
<div class="a" style="left:50px;top:338px;width:9px;height:1px;border-top:1px dotted #9a9a9a;"></div>
<div class="a" style="left:50px;top:358px;width:9px;height:1px;border-top:1px dotted #9a9a9a;"></div>
<div class="a" style="left:66px;top:271px;width:2px;height:10px;background:#fbbc3a;"></div>
<div class="a" style="left:66px;top:283px;width:2px;height:2px;background:#fbbc3a;"></div>
<div class="a" style="left:66px;top:311px;width:2px;height:10px;background:#fbbc3a;"></div>
<div class="a" style="left:66px;top:323px;width:2px;height:2px;background:#fbbc3a;"></div>
<div class="a" style="left:66px;top:331px;width:2px;height:10px;background:#fbbc3a;"></div>
<div class="a" style="left:66px;top:343px;width:2px;height:2px;background:#fbbc3a;"></div>
<div class="a" style="left:66px;top:351px;width:2px;height:10px;background:#fbbc3a;"></div>
<div class="a" style="left:66px;top:363px;width:2px;height:2px;background:#fbbc3a;"></div>
<svg class="a" style="left:59px;top:291px;" width="17" height="15" viewBox="0 0 17 15"><path d="M1.5 8L6 13L15.5 1.5" fill="none" stroke="#2fd23a" stroke-width="2.1"/></svg>
<div class="a" style="left:39px;top:988px;width:637px;height:15px;background:#f1f1f1;"></div>
<div class="a" style="left:57px;top:989px;width:507px;height:13px;border:1px solid #9c9c9c;border-radius:2px;background:linear-gradient(#f4f4f4,#dadada 45%,#c8c8c8 55%,#d6d6d6);"></div>
<svg class="a" style="left:306px;top:992px;" width="8" height="7" viewBox="0 0 8 7"><path d="M1 0V7M4 0V7M7 0V7" stroke="#333" stroke-width="1"/></svg>
<svg class="a" style="left:44px;top:992px;" width="5" height="7" viewBox="0 0 5 7"><path d="M5 0V7L0 3.5Z" fill="#333"/></svg>
<svg class="a" style="left:664px;top:992px;" width="5" height="7" viewBox="0 0 5 7"><path d="M0 0V7L5 3.5Z" fill="#333"/></svg>
<div class="a" style="left:38px;top:1005px;width:639px;height:4px;background:#e2e2e2;border:1px solid #b9b9b9;"></div>
<div class="a" style="left:686px;top:178px;width:1px;height:839px;background:#8e969e;"></div>
<div class="a" style="left:695px;top:513px;width:20px;height:1px;background:#d0d0d0;"></div>
<svg class="a" style="left:694px;top:1005px;" width="4" height="6" viewBox="0 0 4 6"><path d="M4 0V6L0 3Z" fill="#222"/></svg>
<div class="a" style="left:818px;top:178px;width:104px;height:22px;background:#539db7;"></div>
<div class="a" style="top:179.5px;height:18px;line-height:18px;font-size:12px;color:#000;white-space:nowrap;left:748px;"><span class="cj" style="width:48px">欢迎页面</span></div>
<div class="a" style="top:180.75px;height:18px;line-height:18px;font-size:12.5px;color:#fff;white-space:nowrap;left:844.5px;">001.prt</div>
<div class="a" style="top:180.75px;height:18px;line-height:18px;font-size:12.5px;color:#000;white-space:nowrap;left:948.5px;">4-15-<span class="cj" style="width:50px">四轴刀路</span>.prt</div>
<div class="a" style="top:180.75px;height:18px;line-height:18px;font-size:12.5px;color:#000;white-space:nowrap;left:1112.5px;">123.prt</div>
<div class="a" style="left:723px;top:199px;width:1176px;height:2px;background:#4f9bb8;"></div>
<div class="a" style="left:723px;top:200.6px;width:1176px;height:815.4px;background:linear-gradient(#25234b 0%,#1e3866 25%,#174e7d 50%,#125f8e 66%,#0f6896 75.5%,#0f6896 100%);border:1.5px solid #efa55a;border-right:none;"></div>
<div class="a" style="left:0px;top:1016.5px;width:1899px;height:1.5px;background:#c4c6c8;"></div>
<div class="a" style="top:1019px;height:17px;line-height:17px;font-size:11px;color:#000;white-space:nowrap;font-weight:bold;left:924px;"><span class="cj" style="width:22px">全部</span> 1</div>
<svg class="a" style="left:1849px;top:1020px;" width="17" height="17" viewBox="0 0 17 17"><path d="M0.6 5V0.6H5M12 0.6H16.4V5M16.4 12V16.4H12M5 16.4H0.6V12" fill="none" stroke="#333" stroke-width="1.2"/></svg>
<svg class="a" style="left:51px;top:4.5px;" width="16" height="16" viewBox="0 0 16 16"><path d="M0.6 0.6H12.6L15.4 3.4V15.4H0.6Z" fill="none" stroke="#2a2a2a" stroke-width="1.2"/><path d="M3.6 0.6V5.4H11.4V0.6M9 1.8V4.2" fill="none" stroke="#2a2a2a" stroke-width="1.2"/><path d="M3 15V8.6H13V15M5 10.8H11M5 12.9H11" fill="none" stroke="#2a2a2a" stroke-width="1.1"/></svg>
<svg class="a" style="left:80px;top:4.5px;" width="16" height="16" viewBox="0 0 16 16"><path d="M5.5 1L0.8 5.5L5.5 10" fill="none" stroke="#2a2a2a" stroke-width="1.2"/><path d="M1 5.5H10.5A4.7 4.7 0 0 1 10.5 15H9" fill="none" stroke="#2a2a2a" stroke-width="1.2"/></svg>
<svg class="a" style="left:124px;top:4.5px;" width="16" height="16" viewBox="0 0 16 16"><circle cx="3.2" cy="7.5" r="2.3" fill="none" stroke="#2a2a2a" stroke-width="1.1"/><circle cx="7" cy="12.6" r="2.3" fill="none" stroke="#2a2a2a" stroke-width="1.1"/><path d="M5.2 6.4L14.8 2.6C13.5 5.5 10 7.6 5.4 8.4M8.4 10.8L12.6 1C13.4 4.4 11.6 8.2 8.9 11.6" fill="none" stroke="#2a2a2a" stroke-width="1.1"/></svg>
<svg class="a" style="left:147px;top:4.5px;" width="16" height="16" viewBox="0 0 16 16"><path d="M0.6 0.6H9.4V11.4H0.6Z" fill="#fff" stroke="#2a2a2a" stroke-width="1.2"/><path d="M5.6 4.6H11.8L15.4 8V15.4H5.6Z" fill="#fff" stroke="#2a2a2a" stroke-width="1.2"/><path d="M11.6 4.8V8.2H15.2" fill="none" stroke="#2a2a2a" stroke-width="1.1"/></svg>
<svg class="a" style="left:169.5px;top:4.5px;" width="16" height="16" viewBox="0 0 16 16"><path d="M4 2.2H0.6V13.4H5.5M8.6 2.2H12.4V5" fill="none" stroke="#c4c4c4" stroke-width="1.2"/><path d="M4 3.6V1.4H5.4V0.6H7.6V1.4H9V3.6Z" fill="none" stroke="#c4c4c4" stroke-width="1"/><path d="M6.6 6.2H12L15.4 9.4V15.4H6.6Z" fill="#fff" stroke="#c4c4c4" stroke-width="1.2"/><path d="M11.8 6.4V9.6H15.2" fill="none" stroke="#c4c4c4" stroke-width="1.1"/></svg>
<svg class="a" style="left:193px;top:4.5px;" width="16" height="16" viewBox="0 0 16 16"><circle cx="7" cy="7" r="5" fill="none" stroke="#2a2a2a" stroke-width="1.2"/><path d="M7 0V14M0 7H14" stroke="#2a2a2a" stroke-width="1.2"/><rect x="8.6" y="8.6" width="6.8" height="6.8" fill="#fff" stroke="#2a2a2a" stroke-width="1.1"/><path d="M10.3 10.3L13.6 13.6M13.8 11.2V13.8H11.2" fill="none" stroke="#2a2a2a" stroke-width="1"/></svg>
<svg class="a" style="left:222px;top:4.5px;" width="16" height="16" viewBox="0 0 16 16"><rect x="1.2" y="0.5" width="3.6" height="9.5" fill="#3c5fd0"/><path d="M1.2 2.5L4.8 1.5M1.2 5L4.8 4M1.2 7.5L4.8 6.5" stroke="#9fb4ff" stroke-width="0.8"/><path d="M0 10.5L3 12.5L6 10.5" fill="#e8d040"/><path d="M5.5 3.2H12M5.5 6H10" stroke="#6a6a6a" stroke-width="1"/><path d="M7.2 10.4L13.6 3.6L15.4 5.2L9 12Z" fill="#f0b030" stroke="#8a5a10" stroke-width="0.5"/><path d="M13.6 3.6L14.6 2.4L16 4L15.4 5.2Z" fill="#e02020"/><path d="M7.2 10.4L6.6 12.6L9 12Z" fill="#222"/><rect x="5.2" y="11.6" width="10.4" height="4" fill="#fff" stroke="#3a18a8" stroke-width="1.3"/><path d="M7 13.6H9.2M10.4 13.6H13.6" stroke="#222" stroke-width="1"/></svg>
<svg class="a" style="left:265.8px;top:5px;" width="16" height="16" viewBox="0 0 16 16"><path d="M4.2 7.8L11.2 3L15.2 8.6L8.6 12.6Z" fill="#fff" stroke="#2a2a2a" stroke-width="1.2"/><path d="M12.2 2.2L15.8 7.6" stroke="#2a2a2a" stroke-width="1.6"/><path d="M8.6 12.6C6 13.2 3.4 12.2 0.6 9.4C1.6 8.2 3 8.4 4.4 9.6M4.2 7.8L2.4 7.4" fill="none" stroke="#2a2a2a" stroke-width="1.1"/></svg>
<svg class="a" style="left:295px;top:4.5px;" width="16" height="16" viewBox="0 0 16 16"><rect x="0.6" y="0.6" width="9.6" height="8" fill="#fff" stroke="#8a8a8a" stroke-width="1.1"/><path d="M2 2.4H8" stroke="#8a8a8a" stroke-width="1" stroke-dasharray="1.2 1"/><rect x="5.6" y="6" width="9.8" height="9.4" fill="#fff" stroke="#2a2a2a" stroke-width="1.2"/><path d="M5.6 8.6H15.4" stroke="#2a2a2a" stroke-width="1.1"/><path d="M11 7.3H14" stroke="#2a2a2a" stroke-width="1" stroke-dasharray="1 0.8"/></svg>
<svg class="a" style="left:366px;top:4.5px;" width="16" height="16" viewBox="0 0 16 16"><rect x="0.6" y="0.6" width="14.8" height="14.8" fill="#fff" stroke="#2a2a2a" stroke-width="1.2"/><path d="M0.6 3.4H15.4" stroke="#2a2a2a" stroke-width="1.1"/><path d="M9.5 2H14" stroke="#2a2a2a" stroke-width="1" stroke-dasharray="1 0.8"/></svg>
<svg width="0" height="0" style="position:absolute"><defs><linearGradient id="gm" x1="0" x2="1" y1="0" y2="0"><stop offset="0" stop-color="#5a78f0"/><stop offset="0.35" stop-color="#2438c8"/><stop offset="0.75" stop-color="#101c8c"/><stop offset="1" stop-color="#3048c0"/></linearGradient><linearGradient id="gsh" x1="0" x2="1" y1="0" y2="0"><stop offset="0" stop-color="#d8d8e0"/><stop offset="0.35" stop-color="#55555f"/><stop offset="1" stop-color="#15151c"/></linearGradient><linearGradient id="gcu" x1="0" x2="1" y1="0" y2="1"><stop offset="0" stop-color="#9fb4ff"/><stop offset="1" stop-color="#2038c8"/></linearGradient><linearGradient id="gcy" x1="0" x2="0" y1="0" y2="1"><stop offset="0" stop-color="#ffe94a"/><stop offset="1" stop-color="#ffb000"/></linearGradient><linearGradient id="gsheet" x1="0" x2="1" y1="0" y2="1"><stop offset="0" stop-color="#ffffff"/><stop offset="1" stop-color="#c4c8f0"/></linearGradient><linearGradient id="gwave" x1="0" x2="0" y1="0" y2="1"><stop offset="0" stop-color="#ffffff"/><stop offset="1" stop-color="#b8ccf4"/></linearGradient><linearGradient id="gor" x1="0" x2="1" y1="0" y2="1"><stop offset="0" stop-color="#ffb020"/><stop offset="1" stop-color="#f06000"/></linearGradient><linearGradient id="gins" x1="0" x2="1" y1="0" y2="1"><stop offset="0" stop-color="#ffe060"/><stop offset="1" stop-color="#f08010"/></linearGradient><linearGradient id="gmach" x1="0" x2="0" y1="0" y2="1"><stop offset="0" stop-color="#f4f4f0"/><stop offset="1" stop-color="#b8b8b0"/></linearGradient><radialGradient id="gball" cx="0.4" cy="0.35" r="0.7"><stop offset="0" stop-color="#f0f0f0"/><stop offset="1" stop-color="#707070"/></radialGradient></defs></svg>
<svg class="a" style="left:14px;top:71px;" width="47" height="46" viewBox="0 0 47 46"><path d="M0.5 0.5H21.5V21.5H0.5Z" fill="url(#gsheet)" stroke="#3a3aa8" stroke-width="0.9"/><rect x="3.125" y="2.78261" width="3.20833" height="1.91739" fill="#444"/><rect x="8.95833" y="2.78261" width="3.20833" height="1.91739" fill="#444"/><rect x="14.7917" y="2.78261" width="3.20833" height="1.91739" fill="#444"/><rect x="8.95833" y="7.34783" width="3.20833" height="1.91739" fill="#444"/><rect x="14.7917" y="7.34783" width="3.20833" height="1.91739" fill="#444"/><rect x="3.125" y="11.913" width="3.20833" height="1.91739" fill="#444"/><rect x="14.7917" y="11.913" width="3.20833" height="1.91739" fill="#444"/><rect x="3.125" y="16.4783" width="3.20833" height="1.91739" fill="#444"/><rect x="8.95833" y="16.4783" width="3.20833" height="1.91739" fill="#444"/><path d="M13 6C15 2 19 1 21.5 0.5V10H13Z" fill="#8a8a96"/><path d="M13 12.5Q13 10.5 16 10.5H29V33.5H16Q13 33.5 13 31Z" fill="url(#gsheet)" stroke="#3a3aa8" stroke-width="0.9"/><rect x="16" y="14.5" width="3.4" height="1.7" fill="#333"/><rect x="20.3" y="14.5" width="2.6" height="1.7" fill="#333"/><rect x="24.6" y="14.5" width="2.6" height="1.7" fill="#333"/><rect x="16.8" y="18.6" width="2.6" height="1.7" fill="#333"/><rect x="21.1" y="18.6" width="2.6" height="1.7" fill="#333"/><rect x="25.4" y="18.6" width="3.4" height="1.7" fill="#333"/><rect x="16" y="22.7" width="2.6" height="1.7" fill="#333"/><rect x="20.3" y="22.7" width="3.4" height="1.7" fill="#333"/><rect x="24.6" y="22.7" width="2.6" height="1.7" fill="#333"/><rect x="16.8" y="26.8" width="3.4" height="1.7" fill="#333"/><rect x="21.1" y="26.8" width="2.6" height="1.7" fill="#333"/><rect x="25.4" y="26.8" width="2.6" height="1.7" fill="#333"/><rect x="16" y="30.9" width="2.6" height="1.7" fill="#333"/><rect x="20.3" y="30.9" width="2.6" height="1.7" fill="#333"/><rect x="24.6" y="30.9" width="3.4" height="1.7" fill="#333"/><path d="M34.124 27.748V46.492M34.124 33.854H38.384M34.124 42.8H38.384" fill="none" stroke="#1a1aa0" stroke-width="1.3"/><rect x="31" y="21.5" width="6.248" height="6.248" fill="#fff04a" stroke="#1a1aa0" stroke-width="1.3"/><rect x="38.384" y="30.73" width="6.248" height="6.248" fill="#fff04a" stroke="#1a1aa0" stroke-width="1.3"/><rect x="38.384" y="39.676" width="6.248" height="6.248" fill="#fff04a" stroke="#1a1aa0" stroke-width="1.3"/></svg>
<svg class="a" style="left:146px;top:60px;" width="32" height="32" viewBox="0 0 32 32"><path d="M2 4.84L9.65 0.5L19 3.538L11.35 7.444Z" fill="#dfe8ff" stroke="#5060c0" stroke-width="0.5"/><path d="M2 4.84L11.35 7.444L11.35 16L2 13.21Z" fill="url(#gcu)"/><path d="M11.35 7.444L19 3.538L19 12.59L11.35 16Z" fill="#3a50d8"/><rect x="3.24" y="7.5" width="6.76" height="5.6" fill="url(#gcy)" stroke="#e01818" stroke-width="0.9"/><ellipse cx="3.24" cy="10.3" rx="2.24" ry="2.8" fill="#ffe030" stroke="#e01818" stroke-width="0.9"/><path d="M23.7 16.9V30.1M23.7 21.2H26.7M23.7 27.5H26.7" fill="none" stroke="#1a1aa0" stroke-width="1"/><rect x="21.5" y="12.5" width="4.4" height="4.4" fill="#fff04a" stroke="#1a1aa0" stroke-width="1"/><rect x="26.7" y="19" width="4.4" height="4.4" fill="#fff04a" stroke="#1a1aa0" stroke-width="1"/><rect x="26.7" y="25.3" width="4.4" height="4.4" fill="#fff04a" stroke="#1a1aa0" stroke-width="1"/></svg>
<svg class="a" style="left:199px;top:60px;" width="32" height="32" viewBox="0 0 32 32"><rect x="9" y="1" width="7.8" height="14" fill="url(#gsh)"/><g transform="rotate(8 5.25 22)"><path d="M1.26 14H9.24V26.8L5.25 30L1.26 26.8Z" fill="url(#gm)"/><path d="M1.26 20.72L9.24 15.28L9.24 18.8L1.26 24.56Z" fill="#e4e9ff"/><path d="M3.35 27.76L9.24 22.8L9.24 25.84L5.25 29.68Z" fill="#c9d2ff"/><ellipse cx="5.25" cy="14" rx="3.99" ry="1.33" fill="#7f93f6"/></g><path d="M8.725 9.5L15.05 9.5L15.05 15.25L12.75 17.55L7 17.55L7 11.225Z" fill="url(#gins)" stroke="#a04800" stroke-width="0.6"/><circle cx="11.025" cy="13.64" r="1.0925" fill="#111"/><path d="M21.2 17.4V30.6M21.2 21.7H24.2M21.2 28H24.2" fill="none" stroke="#1a1aa0" stroke-width="1"/><rect x="19" y="13" width="4.4" height="4.4" fill="#fff04a" stroke="#1a1aa0" stroke-width="1"/><rect x="24.2" y="19.5" width="4.4" height="4.4" fill="#fff04a" stroke="#1a1aa0" stroke-width="1"/><rect x="24.2" y="25.8" width="4.4" height="4.4" fill="#fff04a" stroke="#1a1aa0" stroke-width="1"/></svg>
<svg class="a" style="left:263px;top:60px;" width="32" height="32" viewBox="0 0 32 32"><path d="M2 1.5V10H26.5V1.5Q22.4167 11.275 18.3333 1.5Q14.25 11.275 10.1667 1.5Q6.08333 11.275 2 1.5Z" fill="url(#gwave)" stroke="#1a4a9a" stroke-width="1.2" stroke-linejoin="miter"/><path d="M2 11.5V19.5H18.5V11.5L16.4375 15.5L14.375 11.5L12.3125 15.5L10.25 11.5L8.1875 15.5L6.125 11.5L4.0625 15.5L2 11.5Z" fill="url(#gwave)" stroke="#1a4a9a" stroke-width="1.2" stroke-linejoin="miter"/><path d="M24.2 17.4V30.6M24.2 21.7H27.2M24.2 28H27.2" fill="none" stroke="#1a1aa0" stroke-width="1"/><rect x="22" y="13" width="4.4" height="4.4" fill="#fff04a" stroke="#1a1aa0" stroke-width="1"/><rect x="27.2" y="19.5" width="4.4" height="4.4" fill="#fff04a" stroke="#1a1aa0" stroke-width="1"/><rect x="27.2" y="25.8" width="4.4" height="4.4" fill="#fff04a" stroke="#1a1aa0" stroke-width="1"/></svg>
<svg class="a" style="left:330px;top:60px;" width="34" height="34" viewBox="0 0 34 34"><path d="M1 10L23 1.5V20L1 28.5Z" fill="#fff"/><path d="M1 10L23 1.5" stroke="#8050c8" stroke-width="1"/><path d="M1 14.625L23 6.125" stroke="#f08020" stroke-width="1"/><path d="M1 19.25L23 10.75" stroke="#f08020" stroke-width="1"/><path d="M1 23.875L23 15.375" stroke="#9a9a9a" stroke-width="1"/><path d="M1 28.5L23 20" stroke="#9a9a9a" stroke-width="1"/><path d="M1 10V28.5" stroke="#b0b0b0" stroke-width="0.9"/><path d="M6.5 7.875V26.375" stroke="#f0a050" stroke-width="0.9"/><path d="M12 5.75V24.25" stroke="#f0a050" stroke-width="0.9"/><path d="M17.5 3.625V22.125" stroke="#f0a050" stroke-width="0.9"/><path d="M23 1.5V20" stroke="#b0b0b0" stroke-width="0.9"/><path d="M11 20L20 16L33 19.5L24 24Z" fill="url(#gor)"/><path d="M11 20L24 24V33L11 28.5Z" fill="#5aa0e8"/><path d="M24 24L33 19.5V28L24 33Z" fill="#1848d8"/><rect x="13" y="23.5" width="8.5" height="4.6" rx="1.6" fill="#f07820" stroke="#fff" stroke-width="0.7" transform="skewY(18) translate(0 -4.3)"/></svg>
<svg class="a" style="left:394px;top:60px;" width="32" height="32" viewBox="0 0 32 32"><path d="M1.5 6.5H15.5V21H1.5Z" fill="url(#gsheet)" stroke="#3a3aa8" stroke-width="0.9"/><rect x="3.25" y="8.07609" width="2.13889" height="1.32391" fill="#444"/><rect x="7.13889" y="8.07609" width="2.13889" height="1.32391" fill="#444"/><rect x="11.0278" y="8.07609" width="2.13889" height="1.32391" fill="#444"/><rect x="7.13889" y="11.2283" width="2.13889" height="1.32391" fill="#444"/><rect x="11.0278" y="11.2283" width="2.13889" height="1.32391" fill="#444"/><rect x="3.25" y="14.3804" width="2.13889" height="1.32391" fill="#444"/><rect x="11.0278" y="14.3804" width="2.13889" height="1.32391" fill="#444"/><rect x="3.25" y="17.5326" width="2.13889" height="1.32391" fill="#444"/><rect x="7.13889" y="17.5326" width="2.13889" height="1.32391" fill="#444"/><path d="M11 15Q11 12.5 14 12.5H30V30H14Q11 30 11 27.5Z" fill="url(#gsheet)" stroke="#3a3aa8" stroke-width="0.9"/><rect x="13.5" y="17.5" width="2.2" height="2" fill="#444"/><rect x="17.4" y="17.5" width="2.2" height="2" fill="#444"/><rect x="21.3" y="17.5" width="2.2" height="2" fill="#444"/><rect x="25.2" y="17.5" width="2.2" height="2" fill="#444"/><rect x="13.5" y="20.8" width="2.2" height="2" fill="#444"/><rect x="17.4" y="20.8" width="2.2" height="2" fill="#444"/><rect x="21.3" y="20.8" width="2.2" height="2" fill="#444"/><rect x="25.2" y="20.8" width="2.2" height="2" fill="#444"/><rect x="13.5" y="24.1" width="2.2" height="2" fill="#444"/><rect x="17.4" y="24.1" width="2.2" height="2" fill="#444"/><rect x="21.3" y="24.1" width="2.2" height="2" fill="#444"/><rect x="25.2" y="24.1" width="2.2" height="2" fill="#444"/><rect x="13.5" y="27.4" width="2.2" height="2" fill="#444"/><rect x="17.4" y="27.4" width="2.2" height="2" fill="#444"/><rect x="21.3" y="27.4" width="2.2" height="2" fill="#444"/><rect x="25.2" y="27.4" width="2.2" height="2" fill="#444"/><path d="M21.5 8.5L30.2 12.0" stroke="#7f9fc0" stroke-width="0.8"/><path d="M21.5 8.5L24.4 15.4" stroke="#7f9fc0" stroke-width="0.8"/><path d="M21.5 8.5L18.0 17.2" stroke="#7f9fc0" stroke-width="0.8"/><path d="M21.5 8.5L14.6 11.4" stroke="#7f9fc0" stroke-width="0.8"/><path d="M21.5 8.5L12.8 5.0" stroke="#7f9fc0" stroke-width="0.8"/><path d="M21.5 8.5L18.6 1.6" stroke="#7f9fc0" stroke-width="0.8"/><path d="M21.5 8.5L25.0 -0.2" stroke="#7f9fc0" stroke-width="0.8"/><path d="M21.5 8.5L28.4 5.6" stroke="#7f9fc0" stroke-width="0.8"/><path d="M21.5 1.0L22.6 5.7L25.7 4.3L24.3 7.4L28.4 8.5L24.3 9.6L25.5 12.5L22.6 11.3L21.5 16.0L20.4 11.3L17.3 12.7L18.7 9.6L14.8 8.5L18.7 7.4L17.4 4.4L20.4 5.7Z" fill="#fff200" stroke="#e0d000" stroke-width="0.3"/></svg>
<svg class="a" style="left:452px;top:59px;" width="34" height="34" viewBox="0 0 34 34"><path d="M5 11.84L16.7 4L31 9.488L19.3 16.544Z" fill="#dfe8ff" stroke="#5060c0" stroke-width="0.5"/><path d="M5 11.84L19.3 16.544L19.3 32L5 26.96Z" fill="url(#gcu)"/><path d="M19.3 16.544L31 9.488L31 25.84L19.3 32Z" fill="#3a50d8"/><rect x="5.6" y="21" width="10.4" height="9" fill="url(#gcy)" stroke="#e01818" stroke-width="0.9"/><ellipse cx="5.6" cy="25.5" rx="3.6" ry="4.5" fill="#ffe030" stroke="#e01818" stroke-width="0.9"/><path d="M13 8L21.7 11.5" stroke="#7f9fc0" stroke-width="0.8"/><path d="M13 8L15.9 14.9" stroke="#7f9fc0" stroke-width="0.8"/><path d="M13 8L9.5 16.7" stroke="#7f9fc0" stroke-width="0.8"/><path d="M13 8L6.1 10.9" stroke="#7f9fc0" stroke-width="0.8"/><path d="M13 8L4.3 4.5" stroke="#7f9fc0" stroke-width="0.8"/><path d="M13 8L10.1 1.1" stroke="#7f9fc0" stroke-width="0.8"/><path d="M13 8L16.5 -0.7" stroke="#7f9fc0" stroke-width="0.8"/><path d="M13 8L19.9 5.1" stroke="#7f9fc0" stroke-width="0.8"/><path d="M13.0 0.5L14.1 5.2L17.2 3.8L15.8 6.9L19.9 8.0L15.8 9.1L17.0 12.0L14.1 10.8L13.0 15.5L11.9 10.8L8.8 12.2L10.2 9.1L6.2 8.0L10.2 6.9L8.9 3.9L11.9 5.2Z" fill="#fff200" stroke="#e0d000" stroke-width="0.3"/></svg>
<svg class="a" style="left:511px;top:60px;" width="32" height="32" viewBox="0 0 32 32"><rect x="16.5" y="0.5" width="10.5" height="19" fill="url(#gsh)"/><g transform="rotate(8 6.5 19.5)"><path d="M1.46 9H11.54V25.8L6.5 30L1.46 25.8Z" fill="url(#gm)"/><path d="M1.46 17.82L11.54 10.68L11.54 15.3L1.46 22.86Z" fill="#e4e9ff"/><path d="M4.1 27.06L11.54 20.55L11.54 24.54L6.5 29.58Z" fill="#c9d2ff"/><ellipse cx="6.5" cy="9" rx="5.04" ry="1.68" fill="#7f93f6"/></g><path d="M15.25 11L23.5 11L23.5 18.5L20.5 21.5L13 21.5L13 13.25Z" fill="url(#gins)" stroke="#a04800" stroke-width="0.6"/><circle cx="18.25" cy="16.4" r="1.425" fill="#111"/><path d="M10 7L18.1 10.3" stroke="#7f9fc0" stroke-width="0.8"/><path d="M10 7L12.7 13.4" stroke="#7f9fc0" stroke-width="0.8"/><path d="M10 7L6.7 15.1" stroke="#7f9fc0" stroke-width="0.8"/><path d="M10 7L3.6 9.7" stroke="#7f9fc0" stroke-width="0.8"/><path d="M10 7L1.9 3.7" stroke="#7f9fc0" stroke-width="0.8"/><path d="M10 7L7.3 0.6" stroke="#7f9fc0" stroke-width="0.8"/><path d="M10 7L13.3 -1.1" stroke="#7f9fc0" stroke-width="0.8"/><path d="M10 7L16.4 4.3" stroke="#7f9fc0" stroke-width="0.8"/><path d="M10.0 0.0L11.1 4.4L14.0 3.0L12.6 5.9L16.4 7.0L12.6 8.1L13.7 10.7L11.1 9.6L10.0 14.0L8.9 9.6L6.0 11.0L7.4 8.1L3.7 7.0L7.4 5.9L6.1 3.1L8.9 4.4Z" fill="#fff200" stroke="#e0d000" stroke-width="0.3"/></svg>
<svg class="a" style="left:564px;top:60px;" width="32" height="32" viewBox="0 0 32 32"><path d="M11.5 13L29 13L21.5 16.1L4 16.1Z" fill="#fff" stroke="#333" stroke-width="0.9"/><path d="M11.5 18L29 18L21.5 21.1L4 21.1Z" fill="#fff" stroke="#333" stroke-width="0.9"/><path d="M11.5 23L29 23L21.5 26.1L4 26.1Z" fill="#fff" stroke="#333" stroke-width="0.9"/><rect x="4" y="9" width="8" height="22" rx="2" fill="url(#gm)"/><ellipse cx="8" cy="10.44" rx="4" ry="1.76" fill="#6f86f4"/><path d="M5.2 15.38L10.8 13.4" stroke="#b9c6ff" stroke-width="1.28" stroke-linecap="round"/><path d="M5.2 18.98L10.8 17" stroke="#b9c6ff" stroke-width="1.28" stroke-linecap="round"/><path d="M5.2 22.58L10.8 20.6" stroke="#b9c6ff" stroke-width="1.28" stroke-linecap="round"/><path d="M5.2 26.18L10.8 24.2" stroke="#b9c6ff" stroke-width="1.28" stroke-linecap="round"/><path d="M5.2 29.78L10.8 27.8" stroke="#b9c6ff" stroke-width="1.28" stroke-linecap="round"/><path d="M12 7L20.7 10.5" stroke="#7f9fc0" stroke-width="0.8"/><path d="M12 7L14.9 13.9" stroke="#7f9fc0" stroke-width="0.8"/><path d="M12 7L8.5 15.7" stroke="#7f9fc0" stroke-width="0.8"/><path d="M12 7L5.1 9.9" stroke="#7f9fc0" stroke-width="0.8"/><path d="M12 7L3.3 3.5" stroke="#7f9fc0" stroke-width="0.8"/><path d="M12 7L9.1 0.1" stroke="#7f9fc0" stroke-width="0.8"/><path d="M12 7L15.5 -1.7" stroke="#7f9fc0" stroke-width="0.8"/><path d="M12 7L18.9 4.1" stroke="#7f9fc0" stroke-width="0.8"/><path d="M12.0 -0.5L13.1 4.2L16.2 2.8L14.8 5.9L18.9 7.0L14.8 8.1L16.0 11.0L13.1 9.8L12.0 14.5L10.9 9.8L7.8 11.2L9.2 8.1L5.2 7.0L9.2 5.9L7.9 2.9L10.9 4.2Z" fill="#fff200" stroke="#e0d000" stroke-width="0.3"/></svg>
<svg class="a" style="left:617px;top:60px;" width="32" height="32" viewBox="0 0 32 32"><path d="M5 11.5V20H30V11.5Q23.75 21.275 17.5 11.5Q11.25 21.275 5 11.5Z" fill="url(#gwave)" stroke="#1a4a9a" stroke-width="1.2" stroke-linejoin="miter"/><path d="M5 22.5V31H30V22.5Q25.8333 32.275 21.6667 22.5Q17.5 32.275 13.3333 22.5Q9.16667 32.275 5 22.5Z" fill="url(#gwave)" stroke="#1a4a9a" stroke-width="1.2" stroke-linejoin="miter"/><path d="M11 8L19.7 11.5" stroke="#7f9fc0" stroke-width="0.8"/><path d="M11 8L13.9 14.9" stroke="#7f9fc0" stroke-width="0.8"/><path d="M11 8L7.5 16.7" stroke="#7f9fc0" stroke-width="0.8"/><path d="M11 8L4.1 10.9" stroke="#7f9fc0" stroke-width="0.8"/><path d="M11 8L2.3 4.5" stroke="#7f9fc0" stroke-width="0.8"/><path d="M11 8L8.1 1.1" stroke="#7f9fc0" stroke-width="0.8"/><path d="M11 8L14.5 -0.7" stroke="#7f9fc0" stroke-width="0.8"/><path d="M11 8L17.9 5.1" stroke="#7f9fc0" stroke-width="0.8"/><path d="M11.0 0.5L12.1 5.2L15.2 3.8L13.8 6.9L17.9 8.0L13.8 9.1L15.0 12.0L12.1 10.8L11.0 15.5L9.9 10.8L6.8 12.2L8.2 9.1L4.2 8.0L8.2 6.9L6.9 3.9L9.9 5.2Z" fill="#fff200" stroke="#e0d000" stroke-width="0.3"/></svg>
<svg class="a" style="left:678.5px;top:60px;" width="32" height="32" viewBox="0 0 32 32"><g opacity="0.9"><path d="M9 26.5L16.0 29.3" stroke="#7f9fc0" stroke-width="0.8"/><path d="M9 26.5L11.3 32.0" stroke="#7f9fc0" stroke-width="0.8"/><path d="M9 26.5L6.2 33.5" stroke="#7f9fc0" stroke-width="0.8"/><path d="M9 26.5L3.5 28.8" stroke="#7f9fc0" stroke-width="0.8"/><path d="M9 26.5L2.0 23.7" stroke="#7f9fc0" stroke-width="0.8"/><path d="M9 26.5L6.7 21.0" stroke="#7f9fc0" stroke-width="0.8"/><path d="M9 26.5L11.8 19.5" stroke="#7f9fc0" stroke-width="0.8"/><path d="M9 26.5L14.5 24.2" stroke="#7f9fc0" stroke-width="0.8"/><path d="M9.0 20.5L9.9 24.3L12.4 23.1L11.2 25.6L14.5 26.5L11.2 27.4L12.2 29.7L9.9 28.7L9.0 32.5L8.1 28.7L5.6 29.9L6.8 27.4L3.6 26.5L6.8 25.6L5.7 23.2L8.1 24.3Z" fill="#fff200" stroke="#e0d000" stroke-width="0.3"/></g><rect x="5" y="0.5" width="7" height="24" rx="1.75" fill="url(#gm)"/><ellipse cx="8.5" cy="1.76" rx="3.5" ry="1.54" fill="#6f86f4"/><path d="M6.05 6.22917L10.95 4.35" stroke="#b9c6ff" stroke-width="1.12" stroke-linecap="round"/><path d="M6.05 9.64583L10.95 7.76667" stroke="#b9c6ff" stroke-width="1.12" stroke-linecap="round"/><path d="M6.05 13.0625L10.95 11.1833" stroke="#b9c6ff" stroke-width="1.12" stroke-linecap="round"/><path d="M6.05 16.4792L10.95 14.6" stroke="#b9c6ff" stroke-width="1.12" stroke-linecap="round"/><path d="M6.05 19.8958L10.95 18.0167" stroke="#b9c6ff" stroke-width="1.12" stroke-linecap="round"/><path d="M6.05 23.3125L10.95 21.4333" stroke="#b9c6ff" stroke-width="1.12" stroke-linecap="round"/><path d="M13.5 18.5C17 20 20 19.5 23.5 18V14.8L31 20.5L24 26V22.8C20 24.5 16.5 24.5 13.5 23Z" fill="#3a50e0"/><path d="M13.5 18.5C17 20 20 19.5 23.5 18V20C20 21.5 16.5 21.5 13.5 20.5Z" fill="#8ea0ff"/></svg>
<svg class="a" style="left:726px;top:60px;" width="32" height="32" viewBox="0 0 32 32"><path d="M13.5 8L31 8L23.5 11.3067L6 11.3067Z" fill="#fff" stroke="#333" stroke-width="0.9"/><path d="M13.5 13.3333L31 13.3333L23.5 16.64L6 16.64Z" fill="#fff" stroke="#333" stroke-width="0.9"/><path d="M13.5 18.6667L31 18.6667L23.5 21.9733L6 21.9733Z" fill="#fff" stroke="#333" stroke-width="0.9"/><g opacity="0.9"><path d="M8 26.5L15.0 29.3" stroke="#7f9fc0" stroke-width="0.8"/><path d="M8 26.5L10.3 32.0" stroke="#7f9fc0" stroke-width="0.8"/><path d="M8 26.5L5.2 33.5" stroke="#7f9fc0" stroke-width="0.8"/><path d="M8 26.5L2.5 28.8" stroke="#7f9fc0" stroke-width="0.8"/><path d="M8 26.5L1.0 23.7" stroke="#7f9fc0" stroke-width="0.8"/><path d="M8 26.5L5.7 21.0" stroke="#7f9fc0" stroke-width="0.8"/><path d="M8 26.5L10.8 19.5" stroke="#7f9fc0" stroke-width="0.8"/><path d="M8 26.5L13.5 24.2" stroke="#7f9fc0" stroke-width="0.8"/><path d="M8.0 20.5L8.9 24.3L11.4 23.1L10.2 25.6L13.5 26.5L10.2 27.4L11.2 29.7L8.9 28.7L8.0 32.5L7.1 28.7L4.6 29.9L5.8 27.4L2.6 26.5L5.8 25.6L4.7 23.2L7.1 24.3Z" fill="#fff200" stroke="#e0d000" stroke-width="0.3"/></g><rect x="4.5" y="2" width="7.5" height="22" rx="1.875" fill="url(#gm)"/><ellipse cx="8.25" cy="3.35" rx="3.75" ry="1.65" fill="#6f86f4"/><path d="M5.625 8.1325L10.875 6.125" stroke="#b9c6ff" stroke-width="1.2" stroke-linecap="round"/><path d="M5.625 11.7825L10.875 9.775" stroke="#b9c6ff" stroke-width="1.2" stroke-linecap="round"/><path d="M5.625 15.4325L10.875 13.425" stroke="#b9c6ff" stroke-width="1.2" stroke-linecap="round"/><path d="M5.625 19.0825L10.875 17.075" stroke="#b9c6ff" stroke-width="1.2" stroke-linecap="round"/><path d="M5.625 22.7325L10.875 20.725" stroke="#b9c6ff" stroke-width="1.2" stroke-linecap="round"/></svg>
<svg class="a" style="left:779px;top:60px;" width="32" height="32" viewBox="0 0 32 32"><path d="M9 31Q19 22.5 30.2 20.2V22.4Q20 24.5 10.5 32.6Z" fill="#c4c6d0"/><path d="M1.7 23.6Q8 16.5 20 13.5L30.2 20.2Q19 22.5 9 31Z" fill="#3a66e6"/><path d="M1.7 23.6Q8 16.5 20 13.5L23.5 15.8Q12 18.5 4 26Z" fill="#a9c6ff"/><path d="M4.6 26.6Q10 20.5 17.5 17.2L20 19.2Q13 22 7.4 29.4Z" fill="#d8200e"/><path d="M5.8 27.8Q11.5 21.5 18.8 18.3L20 19.2Q13 22 7.4 29.4Z" fill="#6a0c06"/><path d="M6.2 28.2L8 29.8" stroke="#fff" stroke-width="0.6"/><rect x="14.2" y="4.3" width="6.8" height="16.6" rx="1.7" fill="url(#gm)"/><ellipse cx="17.6" cy="5.524" rx="3.4" ry="1.496" fill="#6f86f4"/><path d="M15.22 9.855L19.98 8.04" stroke="#b9c6ff" stroke-width="1.088" stroke-linecap="round"/><path d="M15.22 13.155L19.98 11.34" stroke="#b9c6ff" stroke-width="1.088" stroke-linecap="round"/><path d="M15.22 16.455L19.98 14.64" stroke="#b9c6ff" stroke-width="1.088" stroke-linecap="round"/><path d="M15.22 19.755L19.98 17.94" stroke="#b9c6ff" stroke-width="1.088" stroke-linecap="round"/><path d="M0.5 6L3.36 4.46L6 8.2L13.04 0.5L15.46 2.26L6.44 13.26Z" fill="#1fc41f"/></svg>
<svg class="a" style="left:832px;top:60px;" width="32" height="32" viewBox="0 0 32 32"><path d="M3 16L12 12L29 15L20 19.5Z" fill="#fff7a0"/><path d="M3 16L20 19.5V31L3 26.5Z" fill="#ffd818"/><path d="M20 19.5L29 15V26L20 31Z" fill="#e8b000"/><path d="M8 18.5L14 15L23 17L23 26L14 28.5L8 27Z" fill="#ff8838"/><path d="M17 16L24 17.5V24.5L17 23Z" fill="#18c0c8"/><path d="M11 26L17 23L24 24.5L19 28.5Z" fill="#ff40e0"/><rect x="14.5" y="6" width="7" height="19" rx="1.75" fill="url(#gm)"/><ellipse cx="18" cy="7.26" rx="3.5" ry="1.54" fill="#6f86f4"/><path d="M15.55 11.9813L20.45 9.85" stroke="#b9c6ff" stroke-width="1.12" stroke-linecap="round"/><path d="M15.55 15.8563L20.45 13.725" stroke="#b9c6ff" stroke-width="1.12" stroke-linecap="round"/><path d="M15.55 19.7313L20.45 17.6" stroke="#b9c6ff" stroke-width="1.12" stroke-linecap="round"/><path d="M15.55 23.6063L20.45 21.475" stroke="#b9c6ff" stroke-width="1.12" stroke-linecap="round"/><path d="M0.5 5.75L3.49 4.14L6.25 8.05L13.61 0L16.14 1.84L6.71 13.34Z" fill="#1fc41f"/></svg>
<svg class="a" style="left:885px;top:60px;" width="32" height="32" viewBox="0 0 32 32"><path d="M4 14H22Q26 14 26 18V28H4Z" fill="url(#gmach)" stroke="#9a9a94" stroke-width="0.6"/><path d="M9 16.5H16.5V25.5H9Z" fill="#4858b8"/><path d="M10 17.5L15.5 17V21L10 24.5Z" fill="#c8d4ff"/><path d="M18 16H21.5V27H18Z" fill="#e8e8e4"/><path d="M25 21.5H31.5V24H28L26.5 30.5H31.5V32H4V29.5H24Z" fill="#d4d4cc" stroke="#8a8a84" stroke-width="0.5"/><path d="M4.5 5.75L7.49 4.14L10.25 8.05L17.61 0L20.14 1.84L10.71 13.34Z" fill="#1fc41f"/></svg>
<svg class="a" style="left:932.5px;top:60px;" width="32" height="32" viewBox="0 0 32 32"><path d="M9 7H17M9 10H15" stroke="#8a8a8a" stroke-width="0.9"/><rect x="3" y="0.5" width="6.5" height="17.5" rx="1.625" fill="url(#gm)"/><ellipse cx="6.25" cy="1.67" rx="3.25" ry="1.43" fill="#6f86f4"/><path d="M3.975 6.03438L8.525 4.075" stroke="#b9c6ff" stroke-width="1.04" stroke-linecap="round"/><path d="M3.975 9.59688L8.525 7.6375" stroke="#b9c6ff" stroke-width="1.04" stroke-linecap="round"/><path d="M3.975 13.1594L8.525 11.2" stroke="#b9c6ff" stroke-width="1.04" stroke-linecap="round"/><path d="M3.975 16.7219L8.525 14.7625" stroke="#b9c6ff" stroke-width="1.04" stroke-linecap="round"/><path d="M3.5 22.5C4 26.5 7 28 10 27V25L13.5 28.8L10 32V29.8C5.5 30.6 2.5 27.6 3.5 22.5Z" fill="#ff6a10"/><path d="M16 11.5H24.5V14H19.5V26H16Z" fill="#7890d8" stroke="#3a4a90" stroke-width="0.5"/><rect x="24" y="8.5" width="2" height="8.5" fill="#f0a030"/><path d="M24 17H26L25 19.5Z" fill="#333"/><path d="M15 25.5L24.5 21.5L32 26L23 30.5Z" fill="#c4c4c8" stroke="#333" stroke-width="0.9"/><path d="M15 25.5V27.5L23 32.5L32 28V26L23 30.5Z" fill="#333"/><path d="M27 30.8L32 28.2V30L28.5 32Z" fill="#3050e0"/></svg>
<svg class="a" style="left:979px;top:61px;" width="32" height="32" viewBox="0 0 32 32"><path d="M13.1 12L25 12L19.9 14.79L8 14.79Z" fill="#fff" stroke="#333" stroke-width="0.9"/><path d="M13.1 16.5L25 16.5L19.9 19.29L8 19.29Z" fill="#fff" stroke="#333" stroke-width="0.9"/><rect x="8.5" y="9.5" width="4.5" height="12" rx="1.125" fill="url(#gm)"/><ellipse cx="10.75" cy="10.31" rx="2.25" ry="0.99" fill="#6f86f4"/><path d="M9.175 13.7625L12.325 11.975" stroke="#b9c6ff" stroke-width="0.8" stroke-linecap="round"/><path d="M9.175 17.0125L12.325 15.225" stroke="#b9c6ff" stroke-width="0.8" stroke-linecap="round"/><path d="M9.175 20.2625L12.325 18.475" stroke="#b9c6ff" stroke-width="0.8" stroke-linecap="round"/></svg>
<svg class="a" style="left:1038px;top:60px;" width="31" height="31" viewBox="0 0 31 31"><path d="M9 1.5H1.5V9H9V19.5H1.5V28.5H9" fill="none" stroke="#222" stroke-width="1.3"/><circle cx="20.5" cy="10.5" r="5.6" fill="none" stroke="#e01818" stroke-width="1.3"/><path d="M20.5 2V19M11.5 10.5H29.5" stroke="#222" stroke-width="1.2"/></svg>
<svg class="a" style="left:1085px;top:60px;" width="16" height="15" viewBox="0 0 16 15"><rect x="1" y="7.5" width="13.5" height="5.6" fill="#fff" stroke="#222" stroke-width="1"/><path d="M3 13L7 7.6M6.4 13L10.4 7.6M9.8 13L13.8 7.6" stroke="#1c1c70" stroke-width="1.4"/><path d="M2 4.2H12" stroke="#2828c8" stroke-width="1.1"/><path d="M11 2L14.6 4.2L11 6.4Z" fill="#2828c8"/></svg>
<svg class="a" style="left:1085px;top:82px;" width="16" height="16" viewBox="0 0 16 16"><g transform="translate(0 2)"><rect x="1" y="7.5" width="13.5" height="5.6" fill="#fff" stroke="#222" stroke-width="1"/><path d="M3 13L7 7.6M6.4 13L10.4 7.6M9.8 13L13.8 7.6" stroke="#1c1c70" stroke-width="1.4"/></g><path d="M3 3.5H13" stroke="#e01818" stroke-width="1" stroke-dasharray="2 1"/><path d="M1.6 1V8M14.4 1V8" stroke="#e01818" stroke-width="1"/><path d="M12 1.5L14.6 3.5L12 5.5ZM4 1.5L1.4 3.5L4 5.5Z" fill="#e01818"/></svg>
<svg class="a" style="left:1085px;top:106px;" width="16" height="16" viewBox="0 0 16 16"><path d="M5 2.5H1.5V6.5H5V11H1.5V14.5H5" fill="none" stroke="#333" stroke-width="1.1"/><path d="M6.5 4.5H11.5L15 8V15.5H6.5Z" fill="#f4f6ff" stroke="#8890c0" stroke-width="0.8"/><path d="M7 2C9.5 1 11.5 2.5 12.5 5.5L9.5 6.5Z" fill="#f08020"/><path d="M11.5 4.5V8H15" fill="none" stroke="#8890c0" stroke-width="0.8"/></svg>
<svg class="a" style="left:1190.5px;top:60px;" width="31" height="31" viewBox="0 0 31 31"><path d="M0.5 0.5H30.5V6Q30 10 25 11.5H6Q1 10 0.5 6Z" fill="#c86428"/><path d="M0.5 0.5H30.5V3.2H0.5Z" fill="#a04c18"/><path d="M4 9.5Q15 13 27 9.5L25 11.5H6Z" fill="#e08848"/><rect x="7" y="11.5" width="17" height="13.5" fill="#8c8c8c"/><rect x="7" y="11.5" width="5" height="13.5" fill="#a8a8a8"/><rect x="7" y="25" width="17" height="4.8" fill="#ffd800"/><rect x="7" y="24.6" width="17" height="0.9" fill="#222"/></svg>
<svg class="a" style="left:1243px;top:61px;" width="16" height="16" viewBox="0 0 16 16"><path d="M8 0.5L15 8H11V15H5V8H1Z" fill="#d0d0d0"/></svg>
<svg class="a" style="left:1243px;top:106px;" width="16" height="16" viewBox="0 0 16 16"><g transform="rotate(180 8 8)"><path d="M8 0.5L15 8H11V15H5V8H1Z" fill="#d0d0d0"/></g></svg>
<svg class="a" style="left:1243px;top:83px;" width="17" height="16" viewBox="0 0 17 16"><path d="M1 4.5L8.5 1L16 4.5L8.5 8Z" fill="#fff" stroke="#444" stroke-width="0.9"/><path d="M1 8L8.5 4.5L16 8L8.5 11.5Z" fill="#4cb84c" stroke="#2a6a2a" stroke-width="0.7"/><path d="M5 8L8.5 6.2L12 8L8.5 9.8Z" fill="#3030e0"/><path d="M1 11.5L8.5 8.6L16 11.5L8.5 15Z" fill="#fff" stroke="#444" stroke-width="0.9"/></svg>
<svg class="a" style="left:1312px;top:61px;" width="32" height="32" viewBox="0 0 32 32"><path d="M13 8.5H8.5V12.5H13V18H8.5V22H13" fill="none" stroke="#222" stroke-width="1.1"/><path d="M15 15L21 9L24 12L18 18Z" fill="#2838d8"/><path d="M21 9L23 7L26 10L24 12Z" fill="#6f86f4"/></svg>
<svg class="a" style="left:1363.5px;top:63.3px;" width="25" height="25" viewBox="0 0 25 25"><circle cx="12.5" cy="12.5" r="11.6" fill="#fff" stroke="#2a2a2a" stroke-width="1.1"/><path d="M16.5 7.5L8.5 12.5L16.5 17.5Z" fill="none" stroke="#2a2a2a" stroke-width="1.1"/><path d="M7.5 7V18" stroke="#2a2a2a" stroke-width="1.2"/></svg>
<svg class="a" style="left:1411.5px;top:63.3px;" width="25" height="25" viewBox="0 0 25 25"><circle cx="12.5" cy="12.5" r="11.6" fill="#fff" stroke="#2a2a2a" stroke-width="1.1"/><path d="M9 7L18 12.5L9 18Z" fill="none" stroke="#2a2a2a" stroke-width="1.1"/></svg>
<svg class="a" style="left:1444.5px;top:63.3px;" width="25" height="25" viewBox="0 0 25 25"><circle cx="12.5" cy="12.5" r="11.6" fill="#fff" stroke="#2a2a2a" stroke-width="1.1"/><path d="M7.5 7.5L15.5 12.5L7.5 17.5Z" fill="none" stroke="#2a2a2a" stroke-width="1.1"/><path d="M17 7V18" stroke="#2a2a2a" stroke-width="1.2"/></svg>
<svg class="a" style="left:1363.5px;top:98.5px;" width="25" height="25" viewBox="0 0 25 25"><circle cx="12.5" cy="12.5" r="11.6" fill="#fff" stroke="#2a2a2a" stroke-width="1.1"/><path d="M16 7.5L7.5 12.5L16 17.5Z" fill="none" stroke="#2a2a2a" stroke-width="1.1"/></svg>
<svg class="a" style="left:1411.5px;top:98.5px;" width="25" height="25" viewBox="0 0 25 25"><circle cx="12.5" cy="12.5" r="11.6" fill="#fff" stroke="#2a2a2a" stroke-width="1.1"/><rect x="8" y="8" width="3.2" height="9" fill="none" stroke="#2a2a2a" stroke-width="1"/><rect x="13.8" y="8" width="3.2" height="9" fill="none" stroke="#2a2a2a" stroke-width="1"/></svg>
<svg class="a" style="left:1444.5px;top:98.5px;" width="25" height="25" viewBox="0 0 25 25"><circle cx="12.5" cy="12.5" r="11.6" fill="#fff" stroke="#2a2a2a" stroke-width="1.1"/><path d="M7.5 7.5L15.5 12.5L7.5 17.5Z" fill="none" stroke="#2a2a2a" stroke-width="1.1"/><path d="M17 9.5V18" stroke="#2a2a2a" stroke-width="1.1"/><circle cx="17" cy="8.3" r="1.3" fill="none" stroke="#2a2a2a" stroke-width="0.9"/></svg>
<svg class="a" style="left:1396.3px;top:73.5px;" width="6" height="3.5" viewBox="0 0 6 3.5"><path d="M0 0H6L3 3.5Z" fill="#222"/></svg>
<svg class="a" style="left:1540px;top:59px;" width="34" height="34" viewBox="0 0 34 34"><path d="M1 2.5L4.5 0.5L12 8.5L9.5 12Z" fill="#1838d0"/><path d="M9 7.5L13.5 6.5L15 10.5L10.5 14Z" fill="#1838d0"/><ellipse cx="12.8" cy="10.8" rx="1.6" ry="3" transform="rotate(-38 12.8 10.8)" fill="#f0e040"/><path d="M13 15.5L20 11.5L26 14V17L29 18.5V21.5L32 23V27.5L23 32L13 26.5Z" fill="#e01818"/><path d="M13 15.5L20 11.5L26 14L19 18Z" fill="#f05858"/><path d="M19 21L26 17L29 18.5L22 22.5Z" fill="#f05858"/><path d="M22 25.5L29 21.5L32 23L25 27Z" fill="#f05858"/><path d="M13 15.5L19 18V21L22 22.5V25.5L25 27V31L13 26.5Z" fill="#d8d8d8"/><path d="M13 26.5L25 31L23 32.5L12.5 27.5Z" fill="#222"/></svg>
<svg class="a" style="left:1607px;top:65px;" width="26" height="22" viewBox="0 0 26 22"><defs><linearGradient id="gst" x1="0" x2="0" y1="0" y2="1"><stop offset="0" stop-color="#5a8090"/><stop offset="0.35" stop-color="#e8f4f8"/><stop offset="1" stop-color="#3a6070"/></linearGradient></defs><rect x="0.5" y="0" width="5" height="21.5" fill="url(#gst)"/><path d="M5.5 2.5C9 3 10 5 13 5H25.5V16H13C10 16 9 18.5 5.5 19Z" fill="url(#gst)"/><rect x="23.5" y="5" width="2" height="11" fill="#b8d0d8"/></svg>
<svg class="a" style="left:1683px;top:59px;" width="34" height="34" viewBox="0 0 34 34"><path d="M1.5 5L5.5 1H21.5V12L17.5 16.5H1.5Z" fill="#fff" stroke="#444" stroke-width="0.9"/><path d="M17.5 5V16.5M1.5 5H17.5L21.5 1" fill="none" stroke="#444" stroke-width="0.9"/><path d="M4 7Q4 5 9.5 5Q15 5 15 7V9.5H12V15H7V9.5H4Z" fill="#e83030" stroke="#901010" stroke-width="0.6"/><path d="M5 17L12 14L16 18L15 24Q11 27 6.5 24Z" fill="#2a2a30"/><path d="M17 19L24 16.5L31 21L29 30Q24 33.5 19 30Z" fill="#2a2a30"/><path d="M13 15.5L19 17.5L18 21L14 20Z" fill="#3a3a40"/><ellipse cx="10.2" cy="22.3" rx="3.6" ry="3.2" fill="#6070e8"/><ellipse cx="9.6" cy="21.6" rx="1.6" ry="1.3" fill="#b8c0ff"/><ellipse cx="24" cy="28" rx="4.2" ry="3.6" fill="#6070e8"/><ellipse cx="23.2" cy="27" rx="1.9" ry="1.5" fill="#b8c0ff"/></svg>
<svg class="a" style="left:1749px;top:59px;" width="32" height="34" viewBox="0 0 32 34"><g transform="translate(17 1.5) scale(1)"><path d="M0 3.5L5.85 0L13 2.45L7.15 5.6Z" fill="#dfe8ff" stroke="#5060c0" stroke-width="0.5"/><path d="M0 3.5L7.15 5.6L7.15 12.5L0 10.25Z" fill="url(#gcu)"/><path d="M7.15 5.6L13 2.45L13 9.75L7.15 12.5Z" fill="#3a50d8"/></g><rect x="14.58" y="8.5" width="5.92" height="5.2" fill="url(#gcy)" stroke="#e01818" stroke-width="0.9"/><ellipse cx="14.58" cy="11.1" rx="2.08" ry="2.6" fill="#ffe030" stroke="#e01818" stroke-width="0.9"/><path d="M12 5.5L17.8 7.8" stroke="#7f9fc0" stroke-width="0.8"/><path d="M12 5.5L14.0 10.1" stroke="#7f9fc0" stroke-width="0.8"/><path d="M12 5.5L9.7 11.3" stroke="#7f9fc0" stroke-width="0.8"/><path d="M12 5.5L7.4 7.5" stroke="#7f9fc0" stroke-width="0.8"/><path d="M12 5.5L6.2 3.2" stroke="#7f9fc0" stroke-width="0.8"/><path d="M12 5.5L10.0 0.9" stroke="#7f9fc0" stroke-width="0.8"/><path d="M12 5.5L14.3 -0.3" stroke="#7f9fc0" stroke-width="0.8"/><path d="M12 5.5L16.6 3.5" stroke="#7f9fc0" stroke-width="0.8"/><path d="M12.0 0.5L12.8 3.7L14.8 2.7L13.8 4.7L16.6 5.5L13.8 6.3L14.7 8.2L12.8 7.3L12.0 10.5L11.2 7.3L9.2 8.3L10.2 6.3L7.5 5.5L10.2 4.7L9.2 2.7L11.2 3.7Z" fill="#fff200" stroke="#e0d000" stroke-width="0.3"/><path d="M9.1 18.5L21 18.5L15.9 20.7733L4 20.7733Z" fill="#fff" stroke="#333" stroke-width="0.9"/><path d="M9.1 22.1667L21 22.1667L15.9 24.44L4 24.44Z" fill="#fff" stroke="#333" stroke-width="0.9"/><path d="M9.1 25.8333L21 25.8333L15.9 28.1067L4 28.1067Z" fill="#fff" stroke="#333" stroke-width="0.9"/><rect x="3.5" y="15.5" width="5.5" height="15.5" rx="1.375" fill="url(#gm)"/><ellipse cx="6.25" cy="16.49" rx="2.75" ry="1.21" fill="#6f86f4"/><path d="M4.325 20.2781L8.175 18.525" stroke="#b9c6ff" stroke-width="0.88" stroke-linecap="round"/><path d="M4.325 23.4656L8.175 21.7125" stroke="#b9c6ff" stroke-width="0.88" stroke-linecap="round"/><path d="M4.325 26.6531L8.175 24.9" stroke="#b9c6ff" stroke-width="0.88" stroke-linecap="round"/><path d="M4.325 29.8406L8.175 28.0875" stroke="#b9c6ff" stroke-width="0.88" stroke-linecap="round"/></svg>
<svg class="a" style="left:1811px;top:66px;" width="22" height="20" viewBox="0 0 22 20"><path d="M2 5L6 2H19L15.5 5Z" fill="#f4f4f0" stroke="#444" stroke-width="0.7"/><path d="M2 5H15.5V18.5H2Z" fill="#e4e4dc" stroke="#444" stroke-width="0.7"/><path d="M15.5 5L19 2V15.5L15.5 18.5Z" fill="#a8a8a0" stroke="#444" stroke-width="0.7"/><path d="M6.5 5.5Q6.5 3.5 8.8 3.5Q11 3.5 11 5.5L10 8.5V18H7.5V8.5Z" fill="#fff" stroke="#ff10e0" stroke-width="1.3"/></svg>
<svg class="a" style="left:1859px;top:59px;" width="32" height="34" viewBox="0 0 32 34"><path d="M12 8H27M10 11.5H25" stroke="#888" stroke-width="0.9"/><rect x="1.5" y="0.5" width="7.5" height="21" rx="1.875" fill="url(#gm)"/><ellipse cx="5.25" cy="1.85" rx="3.75" ry="1.65" fill="#6f86f4"/><path d="M2.625 6.5225L7.875 4.625" stroke="#b9c6ff" stroke-width="1.2" stroke-linecap="round"/><path d="M2.625 9.9725L7.875 8.075" stroke="#b9c6ff" stroke-width="1.2" stroke-linecap="round"/><path d="M2.625 13.4225L7.875 11.525" stroke="#b9c6ff" stroke-width="1.2" stroke-linecap="round"/><path d="M2.625 16.8725L7.875 14.975" stroke="#b9c6ff" stroke-width="1.2" stroke-linecap="round"/><path d="M2.625 20.3225L7.875 18.425" stroke="#b9c6ff" stroke-width="1.2" stroke-linecap="round"/><rect x="12" y="10.5" width="18.5" height="20.5" fill="#f0f2ff" stroke="#6a6ae0" stroke-width="1.3"/><rect x="14.5" y="13.5" width="3.6" height="3.6" fill="#fff04a" stroke="#2828a8" stroke-width="0.8"/><path d="M20 15.5H28" stroke="#555" stroke-width="1"/><rect x="14.5" y="19.1" width="3.6" height="3.6" fill="#fff04a" stroke="#2828a8" stroke-width="0.8"/><path d="M20 21.1H28" stroke="#555" stroke-width="1"/><rect x="14.5" y="24.7" width="3.6" height="3.6" fill="#fff04a" stroke="#2828a8" stroke-width="0.8"/><path d="M20 26.7H28" stroke="#555" stroke-width="1"/></svg>
<svg class="a" style="left:425px;top:155px;" width="17" height="17" viewBox="0 0 17 17"><path d="M1 5L7 2L13 5V11L7 14.5L1 11Z" fill="#e4e4e4" stroke="#c8c8c8" stroke-width="0.9"/><path d="M1 5L7 8L13 5M7 8V14.5" fill="none" stroke="#c8c8c8" stroke-width="0.9"/><path d="M7 0.5L13 3.5" stroke="#c8c8c8"/></svg>
<svg class="a" style="left:565px;top:155px;" width="17" height="17" viewBox="0 0 17 17"><path d="M5 0V10M0 5H10" stroke="#c8c8c8" stroke-width="1.1"/><circle cx="5" cy="5" r="2.6" fill="none" stroke="#c8c8c8" stroke-width="1"/><ellipse cx="7" cy="12" rx="3.2" ry="2.2" transform="rotate(-35 7 12)" fill="none" stroke="#c8c8c8" stroke-width="1.1"/><ellipse cx="11.5" cy="9" rx="3.2" ry="2.2" transform="rotate(-35 11.5 9)" fill="none" stroke="#c8c8c8" stroke-width="1.1"/></svg>
<svg class="a" style="left:589px;top:155px;" width="17" height="17" viewBox="0 0 17 17"><path d="M0.5 1.5H11L7 7.5V13L4.5 11V7.5Z" fill="none" stroke="#c8c8c8" stroke-width="1.1"/><path d="M10 11.5C12 10.5 14.5 11.5 14.5 14M10 11.5L12 9.8M10 11.5L12 13" fill="none" stroke="#c8c8c8" stroke-width="1"/></svg>
<svg class="a" style="left:614px;top:155px;" width="17" height="17" viewBox="0 0 17 17"><path d="M0.5 1H11.5L8 5.5" fill="none" stroke="#2a2a2a" stroke-width="1.2"/><path d="M0.5 1L4.5 6.5V12" fill="none" stroke="#2a2a2a" stroke-width="1.2"/><ellipse cx="6" cy="1.2" rx="5.5" ry="1" fill="none" stroke="#2a2a2a" stroke-width="0.8"/><rect x="6.5" y="5.5" width="9.5" height="10.5" fill="#fff" stroke="#2a2a2a" stroke-width="1.1"/><path d="M8.5 8.5H10M11.5 8.5H14M8.5 11H10M11.5 11H14M8.5 13.5H10M11.5 13.5H14" stroke="#2a2a2a" stroke-width="1"/></svg>
<svg class="a" style="left:730px;top:155px;" width="17" height="17" viewBox="0 0 17 17"><path d="M3.5 0.6H0.6V13.5H3.5M10.5 0.6H13.4V6" fill="none" stroke="#f07818" stroke-width="1.2"/><circle cx="7" cy="7" r="2.6" fill="none" stroke="#2a2a2a" stroke-width="1"/><path d="M7 2.5V11.5M2.5 7H11.5" stroke="#2a2a2a" stroke-width="1"/><path d="M10.5 12C12.5 11 15 12 15 15M10.5 12L12.4 10.2M10.5 12L12.4 13.6" fill="none" stroke="#2a2a2a" stroke-width="1"/></svg>
<svg class="a" style="left:756px;top:155px;" width="17" height="17" viewBox="0 0 17 17"><rect x="0.6" y="0.6" width="4" height="4" fill="#fff" stroke="#2a2a2a" stroke-width="1"/><path d="M2.6 4.6V16M2.6 8H6M2.6 13.5H6" fill="none" stroke="#2a2a2a" stroke-width="1"/><rect x="5.8" y="5.6" width="4" height="4" fill="#fff" stroke="#f07818" stroke-width="1"/><circle cx="12.5" cy="10.5" r="3.6" fill="#fff" stroke="#2a2a2a" stroke-width="1.1"/><path d="M6 15.5L9.5 11.5L10.5 12.5Z" fill="#2a2a2a"/></svg>
<svg class="a" style="left:780px;top:154.5px;" width="17" height="17" viewBox="0 0 17 17"><path d="M4.5 1H12L16 8L12 15H4.5L0.8 8Z" fill="none" stroke="#18a8e8" stroke-width="1.3"/></svg>
<svg class="a" style="left:806px;top:154.5px;" width="17" height="17" viewBox="0 0 17 17"><path d="M0.8 4.5L6.5 1.5L13 4.5V10.5L6.5 14L0.8 10.5Z" fill="#fff" stroke="#f07818" stroke-width="1.2"/><path d="M0.8 4.5L6.5 7.5L13 4.5M6.5 7.5V14" fill="none" stroke="#f07818" stroke-width="1.1"/><circle cx="12" cy="12.5" r="3" fill="#fff" stroke="#2a2a2a" stroke-width="1"/><path d="M12 8.5V16.5M8 12.5H16" stroke="#2a2a2a" stroke-width="1"/></svg>
<svg class="a" style="left:830px;top:154.5px;" width="17" height="17" viewBox="0 0 17 17"><rect x="0.6" y="0.6" width="9.5" height="9.5" fill="#fff" stroke="#f07818" stroke-width="1.3"/><circle cx="11.5" cy="12" r="3" fill="#fff" stroke="#2a2a2a" stroke-width="1"/><path d="M11.5 7.5V16.5M7 12H16" stroke="#2a2a2a" stroke-width="1"/></svg>
<svg class="a" style="left:871px;top:155px;" width="17" height="17" viewBox="0 0 17 17"><path d="M0.8 5L8 1.5L16 5V11.5L8 15.5L0.8 11.5Z" fill="#d8d8d8" stroke="#a8a8a8" stroke-width="0.9"/><path d="M0.8 5L8 8.5L16 5M8 8.5V15.5" fill="none" stroke="#a8a8a8" stroke-width="0.9"/><path d="M3 7.5L15 11" stroke="#f07818" stroke-width="1.3"/></svg>
<svg class="a" style="left:895.5px;top:155px;" width="17" height="17" viewBox="0 0 17 17"><path d="M0.8 5L8 1.5L16 5V11.5L8 15.5L0.8 11.5Z" fill="#d8d8d8" stroke="#a8a8a8" stroke-width="0.9"/><path d="M0.8 5L8 8.5L16 5M8 8.5V15.5" fill="none" stroke="#a8a8a8" stroke-width="0.9"/><path d="M8 8.5L16 5V11.5L8 15.5Z" fill="#fff0e0" stroke="#f07818" stroke-width="1.1"/></svg>
<svg class="a" style="left:935px;top:155px;" width="17" height="17" viewBox="0 0 17 17"><rect x="0.6" y="0.6" width="14.8" height="14.8" fill="#fff" stroke="#2a2a2a" stroke-width="1.2"/><path d="M0.6 3.2H15.4" stroke="#2a2a2a" stroke-width="1"/><path d="M9.5 1.9H14" stroke="#2a2a2a" stroke-width="0.9" stroke-dasharray="1 0.8"/><rect x="2.2" y="5.2" width="8" height="6.6" fill="none" stroke="#f07818" stroke-width="1.2"/><circle cx="11" cy="8.6" r="3" fill="#fff" stroke="#2a2a2a" stroke-width="1"/><path d="M9 11L6 14.6" stroke="#2a2a2a" stroke-width="1.3"/></svg>
<svg class="a" style="left:959px;top:155px;" width="17" height="17" viewBox="0 0 17 17"><rect x="0.6" y="0.6" width="14.8" height="14.8" fill="#fff" stroke="#2a2a2a" stroke-width="1.2"/><path d="M0.6 3.2H15.4" stroke="#2a2a2a" stroke-width="1"/><path d="M9.5 1.9H14" stroke="#2a2a2a" stroke-width="0.9" stroke-dasharray="1 0.8"/><path d="M3 9.3H13M5.2 7.2L3 9.3L5.2 11.4M10.8 7.2L13 9.3L10.8 11.4" fill="none" stroke="#2a2a2a" stroke-width="1"/></svg>
<svg class="a" style="left:985px;top:155px;" width="17" height="17" viewBox="0 0 17 17"><rect x="0.6" y="0.6" width="14.8" height="14.8" fill="#fff" stroke="#2a2a2a" stroke-width="1.2"/><path d="M0.6 3.2H15.4" stroke="#2a2a2a" stroke-width="1"/><path d="M9.5 1.9H14" stroke="#2a2a2a" stroke-width="0.9" stroke-dasharray="1 0.8"/><path d="M11.6 9.4A3.6 3.6 0 1 1 9.4 6" fill="none" stroke="#2a2a2a" stroke-width="1.1"/><path d="M8.6 4.4L11 6.2L8.6 7.6" fill="none" stroke="#2a2a2a" stroke-width="1"/></svg>
<svg class="a" style="left:1009px;top:155px;" width="17" height="17" viewBox="0 0 17 17"><path d="M0.8 4.5L8 1L16 4.5V10.5L8 15L0.8 10.5Z" fill="#8c8c8c" stroke="#2a2a2a" stroke-width="1.1"/><path d="M0.8 4.5L8 1L16 4.5L8 8.2Z" fill="#d8d8d8" stroke="#2a2a2a" stroke-width="1"/><path d="M8 8.2V15" stroke="#2a2a2a" stroke-width="1"/></svg>
<svg class="a" style="left:1035px;top:155px;" width="17" height="17" viewBox="0 0 17 17"><path d="M0.8 4L6.5 1L12.5 4V9L6.5 12.5L0.8 9Z" fill="#e8e8e8" stroke="#c8c8c8" stroke-width="0.9"/><path d="M0.8 4L6.5 7L12.5 4" fill="none" stroke="#c8c8c8" stroke-width="0.9"/><circle cx="12" cy="12" r="3.2" fill="#fff" stroke="#c8c8c8" stroke-width="1.6" stroke-dasharray="1.6 1"/><circle cx="12" cy="12" r="2.2" fill="#fff" stroke="#c8c8c8" stroke-width="0.9"/></svg>
<svg class="a" style="left:1059px;top:155px;" width="17" height="17" viewBox="0 0 17 17"><rect x="0.6" y="0.6" width="14.8" height="14.8" fill="#fff" stroke="#2a2a2a" stroke-width="1.2"/><path d="M0.6 3.2H15.4" stroke="#2a2a2a" stroke-width="1"/><path d="M9.5 1.9H14" stroke="#2a2a2a" stroke-width="0.9" stroke-dasharray="1 0.8"/><path d="M3 7.4V5.4H5M11 5.4H13V7.4M13 11.4V13.4H11M5 13.4H3V11.4M3.2 5.6L5.4 7.8M12.8 5.6L10.6 7.8M3.2 13.2L5.4 11M12.8 13.2L10.6 11" fill="none" stroke="#2a2a2a" stroke-width="0.9"/></svg>
<svg class="a" style="left:1100px;top:154px;" width="17" height="17" viewBox="0 0 17 17"><path d="M5 3Q8.5 0.5 12 3L14 9.5Q17 11 16.5 12.5Q9 17 0.8 12.5Q0.5 11 3 9.5Z" fill="#8c8c8c" stroke="#555" stroke-width="0.8"/><path d="M3 9.5Q8.5 12.5 14 9.5" fill="none" stroke="#555" stroke-width="0.8"/><path d="M5 3Q8.5 5 12 3" fill="none" stroke="#bbb" stroke-width="0.8"/></svg>
<svg class="a" style="left:1138px;top:155px;" width="18" height="17" viewBox="0 0 18 17"><path d="M0.8 4.5L5 1.5H13L17 4.5V12Q9 18 0.8 12Z" fill="#9a9a9a" stroke="#2a2a2a" stroke-width="1"/><path d="M0.8 4.5Q9 9.5 17 4.5L13 1.5H5Z" fill="#d4d4d4" stroke="#2a2a2a" stroke-width="1"/></svg>
<svg class="a" style="left:1179px;top:153px;" width="20" height="20" viewBox="0 0 20 20"><path d="M3.5 1V10.5M3.5 10.5L12 6" fill="none" stroke="#2a2a2a" stroke-width="1"/><path d="M3.5 10.5L12 6" stroke="#18b030" stroke-width="1.1"/><path d="M3.5 10.5L6.5 12.5" stroke="#e01818" stroke-width="1.1"/><path d="M3.5 1V10.5" stroke="#2840d8" stroke-width="1.1"/><text x="5.2" y="6.8" font-size="6.6" font-weight="bold" font-family="Liberation Sans, sans-serif" fill="#222" textLength="14">MCS</text><path d="M7 14.5Q13 7 19 14.5Q13 22 7 14.5Z" fill="#fff" stroke="#2a2a2a" stroke-width="1"/><circle cx="13" cy="14.5" r="2.3" fill="#2a2a2a"/></svg>
<svg class="a" style="left:1203px;top:153px;" width="20" height="20" viewBox="0 0 20 20"><path d="M3.5 1V10.5M3.5 10.5L12 6" fill="none" stroke="#2a2a2a" stroke-width="1"/><path d="M3.5 10.5L12 6" stroke="#18b030" stroke-width="1.1"/><path d="M3.5 10.5L6.5 12.5" stroke="#e01818" stroke-width="1.1"/><path d="M3.5 1V10.5" stroke="#2840d8" stroke-width="1.1"/><path d="M6.5 14.5Q12.5 7 18.5 14.5Q12.5 22 6.5 14.5Z" fill="#fff" stroke="#2a2a2a" stroke-width="1"/><circle cx="12.5" cy="14.5" r="2.3" fill="#2a2a2a"/></svg>
<svg class="a" style="left:1230px;top:154px;" width="18" height="18" viewBox="0 0 18 18"><path d="M0.5 6Q7 -2 13.5 6Q7 14 0.5 6Z" fill="#fff" stroke="#2a2a2a" stroke-width="1"/><circle cx="7" cy="6" r="2.6" fill="#2a2a2a"/><rect x="7.6" y="6.6" width="9.2" height="10.6" fill="#fff" stroke="#2a2a2a" stroke-width="1.1"/><path d="M9.6 9.6H11M12.4 9.6H15M9.6 12H11M12.4 12H15M9.6 14.4H11M12.4 14.4H15" stroke="#2a2a2a" stroke-width="1"/></svg>
<svg class="a" style="left:1268px;top:154px;" width="18" height="18" viewBox="0 0 18 18"><path d="M2 5Q8.5 -1.5 15 5" fill="none" stroke="#2a2a2a" stroke-width="1"/><path d="M1 17L16 1" stroke="#2a2a2a" stroke-width="1.2"/><path d="M5.5 12.5Q11 6 16.5 12.5Q11 19 5.5 12.5Z" fill="#fff" stroke="#2a2a2a" stroke-width="1"/><circle cx="11" cy="12.5" r="2" fill="#2a2a2a"/></svg>
<svg class="a" style="left:7.5px;top:184.5px;" width="14" height="14" viewBox="0 0 14 14"><circle cx="7" cy="7" r="4.2" fill="none" stroke="#2a2a2a" stroke-width="1.6"/><circle cx="7" cy="7" r="5.4" fill="none" stroke="#2a2a2a" stroke-width="2.2" stroke-dasharray="1.7 2.54"/></svg>
<svg class="a" style="left:7px;top:226px;" width="22" height="27" viewBox="0 0 22 27"><path d="M1 9L7 6L13 9V23L7 26L1 23Z" fill="#c8c8c8" stroke="#555" stroke-width="0.9"/><path d="M7 6L13 2.5L20 6L13 9Z" fill="#f0f0f0" stroke="#555" stroke-width="0.9"/><path d="M13 9L20 6V13L13 16.5Z" fill="#9a9a9a" stroke="#555" stroke-width="0.9"/><path d="M1 9L7 12L13 9M7 12V26M1 16L7 19L13 16.5" fill="none" stroke="#555" stroke-width="0.9"/><path d="M1 9L7 6L13 9L7 12Z" fill="#ececec" stroke="#555" stroke-width="0.9"/></svg>
<svg class="a" style="left:5px;top:270px;" width="26" height="25" viewBox="0 0 26 25"><path d="M8 9L14 6L20 9V17L14 20L8 17Z" fill="#d0d0d0" stroke="#555" stroke-width="0.8"/><path d="M1 7L7 4L13 7V15L7 18L1 15Z" fill="#f07818"/><path d="M1 7L7 4L13 7L7 10Z" fill="#ffb060"/><path d="M7 10V18L13 15V7Z" fill="#c85a08"/><path d="M3 16L9 13L14 16V21L9 24L3 21Z" fill="#b8b8b8" stroke="#555" stroke-width="0.8"/><path d="M14 10L25 21V10L14 21Z" fill="#fff" stroke="#222" stroke-width="1.1" stroke-linejoin="round"/></svg>
<svg class="a" style="left:5px;top:313px;" width="26" height="25" viewBox="0 0 26 25"><path d="M1.5 14.5L12 22V24.6L1.5 17.2Z" fill="#b4b4b4" stroke="#333" stroke-width="0.8"/><path d="M12 22L24.7 15.5V18L12 24.6Z" fill="#9c9c9c" stroke="#333" stroke-width="0.8"/><path d="M1.5 14.5L15.6 8L24.7 15.5L12 22Z" fill="#e2e2e2" stroke="#333" stroke-width="0.8"/><path d="M3 14L6 5.6Q8 1.6 12.7 0.7L15.6 1.9V8.2L6.6 13.2Z" fill="#d4d4d4" stroke="#333" stroke-width="0.9"/><path d="M6.6 13.2L9 5.8Q10.5 2.8 15.6 1.9V8.2Z" fill="#9a9a9a"/><ellipse cx="13.6" cy="16" rx="4.3" ry="2.4" fill="#8a8a8a" stroke="#333" stroke-width="0.8"/><ellipse cx="13.6" cy="16.9" rx="2.9" ry="1.4" fill="#dcdcdc"/></svg>
<svg class="a" style="left:8px;top:354px;" width="22" height="27" viewBox="0 0 22 27"><rect x="2" y="0.5" width="4" height="10.5" rx="1" fill="url(#gm)"/><ellipse cx="4" cy="1.22" rx="2" ry="0.88" fill="#6f86f4"/><path d="M2.6 4.25833L5.4 2.7" stroke="#b9c6ff" stroke-width="0.8" stroke-linecap="round"/><path d="M2.6 7.09167L5.4 5.53333" stroke="#b9c6ff" stroke-width="0.8" stroke-linecap="round"/><path d="M2.6 9.925L5.4 8.36667" stroke="#b9c6ff" stroke-width="0.8" stroke-linecap="round"/><path d="M7.5 3H15M7.5 5.5H13M7.5 8H11" stroke="#2858c8" stroke-width="0.9"/><path d="M4 11V26M4 13.5H20" stroke="#111" stroke-width="1.2"/><path d="M4 21.5H9" stroke="#1838c0" stroke-width="1.3"/><path d="M10 18H13.5V21H17V24.5H10Z" fill="#fff" stroke="#1838c0" stroke-width="1"/><path d="M4 13.5V26" stroke="#1838c0" stroke-width="1.3"/></svg>
<svg class="a" style="left:5.5px;top:396px;" width="26" height="26" viewBox="0 0 26 26"><path d="M0.5 8L17 1V15.5L0.5 22.5Z" fill="#fff"/><path d="M0.5 8L17 1" stroke="#8050c8" stroke-width="0.9"/><path d="M0.5 11.625L17 4.625" stroke="#f08020" stroke-width="0.9"/><path d="M0.5 15.25L17 8.25" stroke="#f08020" stroke-width="0.9"/><path d="M0.5 18.875L17 11.875" stroke="#9a9a9a" stroke-width="0.9"/><path d="M0.5 22.5L17 15.5" stroke="#9a9a9a" stroke-width="0.9"/><path d="M0.5 8V22.5" stroke="#b0b0b0" stroke-width="0.8"/><path d="M4.625 6.25V20.75" stroke="#f0a050" stroke-width="0.8"/><path d="M8.75 4.5V19" stroke="#f0a050" stroke-width="0.8"/><path d="M12.875 2.75V17.25" stroke="#f0a050" stroke-width="0.8"/><path d="M17 1V15.5" stroke="#b0b0b0" stroke-width="0.8"/><path d="M8 15.5L15 12.5L25 15L18 18.5Z" fill="url(#gor)"/><path d="M8 15.5L18 18.5V25.5L8 22Z" fill="#5aa0e8"/><path d="M18 18.5L25 15V21.5L18 25.5Z" fill="#1848d8"/><rect x="9.6" y="18" width="6.6" height="3.4" rx="1.2" fill="#f07820" stroke="#fff" stroke-width="0.6" transform="skewY(17) translate(0 -3.2)"/></svg>
<svg class="a" style="left:6px;top:430px;" width="26" height="32" viewBox="0 0 26 32"><g transform="translate(0 3.5) scale(1.08)"><path d="M2 8H13Q15.5 8 15.5 11V22H2Z" fill="url(#gmach)" stroke="#333" stroke-width="1"/><path d="M5 10.5H10.5V19.5H5Z" fill="#5868c0" stroke="#222" stroke-width="0.6"/><path d="M6 11.5L9.8 11V15L6 18Z" fill="#d0d8ff"/><path d="M12 10H14V21H12Z" fill="#e8e8e4" stroke="#555" stroke-width="0.5"/><path d="M15 16H22V18.5H19L17.5 24.5H22V26.5H1V24H15Z" fill="#d4d4cc" stroke="#222" stroke-width="0.9"/></g><path d="M10 5C11 2 14 1 16 3" fill="none" stroke="#f07818" stroke-width="1.6"/><path d="M16 0.8L18 4.2L14.5 4.6Z" fill="#f07818"/><rect x="17" y="2" width="5.5" height="5.5" fill="#fff04a" stroke="#e01818" stroke-width="0.9"/><path d="M17 2L19 0.5H24.5L22.5 2M24.5 0.5V6L22.5 7.5" fill="#ffe0a0" stroke="#e01818" stroke-width="0.8"/></svg>
<svg class="a" style="left:9.5px;top:480px;" width="19" height="27" viewBox="0 0 19 27"><path d="M1 6L6 1.5H17.5V21.5L12.5 26H1Z" fill="#e4e4e4" stroke="#222" stroke-width="1.1"/><path d="M1 6H12.5V26M12.5 6L17.5 1.5M5 6V26M8.8 6V26M5 6L9.5 1.5M8.8 6L13.5 1.5" fill="none" stroke="#222" stroke-width="1"/></svg>
<svg class="a" style="left:5.5px;top:533px;" width="25" height="27" viewBox="0 0 25 27"><circle cx="9" cy="17.5" r="8.4" fill="url(#gball)" stroke="#555" stroke-width="0.8"/><rect x="8" y="15.5" width="2" height="6.5" fill="#fff"/><circle cx="9" cy="12.8" r="1.2" fill="#fff"/><path d="M12 4.5A12 12 0 0 1 21 15" fill="none" stroke="#aaa" stroke-width="0.9"/><path d="M13 1A15.5 15.5 0 0 1 24.5 14" fill="none" stroke="#bbb" stroke-width="0.9"/></svg>
<svg class="a" style="left:5.5px;top:588px;" width="25" height="25" viewBox="0 0 25 25"><rect x="0.6" y="0.6" width="23.8" height="23.8" fill="#e8e8e8" stroke="#222" stroke-width="1.1"/><path d="M0.6 4.8H24.4" stroke="#222" stroke-width="1"/><path d="M15 2.7H22" stroke="#222" stroke-width="1" stroke-dasharray="1.2 1.4"/><circle cx="12.5" cy="14.5" r="7.6" fill="#18889c"/><path d="M8 10Q11 8 12 11Q15 11 14 14Q11 16 10 19Q7 17 7 14ZM15 8.5Q18 9.5 19 13Q17 14 16 11.5ZM15 17Q17 16 18.5 17.5Q17 20.5 14.5 21Z" fill="#8cd4e0"/></svg>
<svg class="a" style="left:5.5px;top:642px;" width="24" height="24" viewBox="0 0 24 24"><circle cx="12" cy="12" r="11.2" fill="none" stroke="#222" stroke-width="1.1"/><path d="M12 5V13H6.5" fill="none" stroke="#222" stroke-width="1.2"/><path d="M12 1.5V3M12 21V22.5M1.5 12H3M21 12H22.5" stroke="#222" stroke-width="1"/></svg>
<svg class="a" style="left:6.5px;top:685px;" width="23" height="24" viewBox="0 0 23 24"><defs><linearGradient id="grb" x1="0" x2="0" y1="0" y2="1"><stop offset="0" stop-color="#f01010"/><stop offset="0.25" stop-color="#f0e010"/><stop offset="0.5" stop-color="#18d018"/><stop offset="0.75" stop-color="#10c8e8"/><stop offset="1" stop-color="#1818f0"/></linearGradient></defs><rect x="1" y="1" width="8.5" height="21.5" fill="url(#grb)"/><path d="M10.5 6L13.5 4.5L21 20L18.5 21.5Z" fill="#111"/><path d="M11.5 4.5L15.4 6.1" stroke="#7f9fc0" stroke-width="0.8"/><path d="M11.5 4.5L12.8 7.6" stroke="#7f9fc0" stroke-width="0.8"/><path d="M11.5 4.5L9.9 8.4" stroke="#7f9fc0" stroke-width="0.8"/><path d="M11.5 4.5L8.4 5.8" stroke="#7f9fc0" stroke-width="0.8"/><path d="M11.5 4.5L7.6 2.9" stroke="#7f9fc0" stroke-width="0.8"/><path d="M11.5 4.5L10.2 1.4" stroke="#7f9fc0" stroke-width="0.8"/><path d="M11.5 4.5L13.1 0.6" stroke="#7f9fc0" stroke-width="0.8"/><path d="M11.5 4.5L14.6 3.2" stroke="#7f9fc0" stroke-width="0.8"/><path d="M11.5 1.1L12.0 3.2L13.4 2.6L12.8 4.0L14.6 4.5L12.8 5.0L13.3 6.3L12.0 5.8L11.5 7.9L11.0 5.8L9.6 6.4L10.2 5.0L8.4 4.5L10.2 4.0L9.6 2.6L11.0 3.2Z" fill="#fff200" stroke="#e0d000" stroke-width="0.3"/></svg>
<svg class="a" style="left:6.5px;top:727.5px;" width="24" height="25" viewBox="0 0 24 25"><path d="M11.1 7L23 7L17.9 9.79L6 9.79Z" fill="#fff" stroke="#2858c8" stroke-width="0.9"/><path d="M11.1 11.5L23 11.5L17.9 14.29L6 14.29Z" fill="#fff" stroke="#2858c8" stroke-width="0.9"/><g opacity="0.9"><path d="M7 20.5L12.2 22.6" stroke="#7f9fc0" stroke-width="0.8"/><path d="M7 20.5L8.8 24.6" stroke="#7f9fc0" stroke-width="0.8"/><path d="M7 20.5L4.9 25.7" stroke="#7f9fc0" stroke-width="0.8"/><path d="M7 20.5L2.9 22.3" stroke="#7f9fc0" stroke-width="0.8"/><path d="M7 20.5L1.8 18.4" stroke="#7f9fc0" stroke-width="0.8"/><path d="M7 20.5L5.2 16.4" stroke="#7f9fc0" stroke-width="0.8"/><path d="M7 20.5L9.1 15.3" stroke="#7f9fc0" stroke-width="0.8"/><path d="M7 20.5L11.1 18.7" stroke="#7f9fc0" stroke-width="0.8"/><path d="M7.0 16.0L7.7 18.8L9.5 18.0L8.7 19.8L11.1 20.5L8.7 21.2L9.4 22.9L7.7 22.2L7.0 25.0L6.3 22.2L4.5 23.0L5.3 21.2L3.0 20.5L5.3 19.8L4.5 18.0L6.3 18.8Z" fill="#fff200" stroke="#e0d000" stroke-width="0.3"/></g><rect x="4" y="3" width="5.5" height="16" rx="1.375" fill="url(#gm)"/><ellipse cx="6.75" cy="3.99" rx="2.75" ry="1.21" fill="#6f86f4"/><path d="M4.825 7.84688L8.675 6.025" stroke="#b9c6ff" stroke-width="0.88" stroke-linecap="round"/><path d="M4.825 11.1594L8.675 9.3375" stroke="#b9c6ff" stroke-width="0.88" stroke-linecap="round"/><path d="M4.825 14.4719L8.675 12.65" stroke="#b9c6ff" stroke-width="0.88" stroke-linecap="round"/><path d="M4.825 17.7844L8.675 15.9625" stroke="#b9c6ff" stroke-width="0.88" stroke-linecap="round"/><path d="M12 7L15 5.5L22 20L19.5 21.5Z" fill="#111"/><path d="M13 5.5L16.9 7.1" stroke="#7f9fc0" stroke-width="0.8"/><path d="M13 5.5L14.3 8.6" stroke="#7f9fc0" stroke-width="0.8"/><path d="M13 5.5L11.4 9.4" stroke="#7f9fc0" stroke-width="0.8"/><path d="M13 5.5L9.9 6.8" stroke="#7f9fc0" stroke-width="0.8"/><path d="M13 5.5L9.1 3.9" stroke="#7f9fc0" stroke-width="0.8"/><path d="M13 5.5L11.7 2.4" stroke="#7f9fc0" stroke-width="0.8"/><path d="M13 5.5L14.6 1.6" stroke="#7f9fc0" stroke-width="0.8"/><path d="M13 5.5L16.1 4.2" stroke="#7f9fc0" stroke-width="0.8"/><path d="M13.0 2.1L13.5 4.2L14.9 3.6L14.3 5.0L16.1 5.5L14.3 6.0L14.8 7.3L13.5 6.8L13.0 8.9L12.5 6.8L11.1 7.4L11.7 6.0L9.9 5.5L11.7 5.0L11.1 3.6L12.5 4.2Z" fill="#fff200" stroke="#e0d000" stroke-width="0.3"/></svg>
<svg class="a" style="left:7px;top:769px;" width="23" height="24" viewBox="0 0 23 24"><path d="M0.6 5H5V1.5H10V5H22.4V23H0.6Z" fill="#f4f4f4" stroke="#222" stroke-width="1.1"/><path d="M5.5 8.5L17.5 20M17.5 8.5L5.5 20" stroke="#3a7a74" stroke-width="2.6"/><circle cx="5.5" cy="8.5" r="2" fill="#3a7a74"/><circle cx="17.5" cy="8.5" r="2.3" fill="#f4f4f4" stroke="#3a7a74" stroke-width="1.5"/><path d="M5.5 8.5L17.5 20M17.5 8.5L5.5 20" stroke="#bcd8d4" stroke-width="0.7"/></svg>
<svg class="a" style="left:5.5px;top:808px;" width="26" height="28" viewBox="0 0 26 28"><g transform="translate(0 4) scale(1)"><path d="M2 8H13Q15.5 8 15.5 11V22H2Z" fill="url(#gmach)" stroke="#333" stroke-width="1"/><path d="M5 10.5H10.5V19.5H5Z" fill="#5868c0" stroke="#222" stroke-width="0.6"/><path d="M6 11.5L9.8 11V15L6 18Z" fill="#d0d8ff"/><path d="M12 10H14V21H12Z" fill="#e8e8e4" stroke="#555" stroke-width="0.5"/><path d="M15 16H22V18.5H19L17.5 24.5H22V26.5H1V24H15Z" fill="#d4d4cc" stroke="#222" stroke-width="0.9"/></g><path d="M3 27H20" stroke="#111" stroke-width="2"/><path d="M13 3.5H17L18.5 5H24V12H13Z" fill="#e8b830" stroke="#8a6a10" stroke-width="0.6"/><path d="M13 12L15.5 6.5H25.5L24 12Z" fill="#ffe060" stroke="#8a6a10" stroke-width="0.6"/><path d="M18 1C20 0 22 1 22.5 3" fill="none" stroke="#18a030" stroke-width="1.3"/><path d="M24 2L22.6 4.6L20.8 2.6Z" fill="#18a030"/></svg>
<svg class="a" style="left:692px;top:191px;" width="25" height="23" viewBox="0 0 25 23"><rect x="0.6" y="0.6" width="23.8" height="21.8" fill="#fff" stroke="#222" stroke-width="1.1"/><path d="M0.6 4.2H24.4" stroke="#222" stroke-width="1"/><path d="M16 2.4H22" stroke="#222" stroke-width="1" stroke-dasharray="1.2 1.2"/><path d="M17.6 13.5A5.4 5.4 0 1 1 13 8.2" fill="none" stroke="#222" stroke-width="1.2"/><path d="M11 5.8L14.6 8.2L11.4 10.6" fill="none" stroke="#222" stroke-width="1.1"/></svg>
<svg class="a" style="left:692px;top:222px;" width="24" height="24" viewBox="0 0 24 24"><path d="M7 6H15M7 9H13M7 12H11" stroke="#777" stroke-width="0.9"/><rect x="1.5" y="0.5" width="6" height="15" rx="1.5" fill="url(#gm)"/><ellipse cx="4.5" cy="1.58" rx="3" ry="1.32" fill="#6f86f4"/><path d="M2.4 5.45L6.6 3.8" stroke="#b9c6ff" stroke-width="0.96" stroke-linecap="round"/><path d="M2.4 8.45L6.6 6.8" stroke="#b9c6ff" stroke-width="0.96" stroke-linecap="round"/><path d="M2.4 11.45L6.6 9.8" stroke="#b9c6ff" stroke-width="0.96" stroke-linecap="round"/><path d="M2.4 14.45L6.6 12.8" stroke="#b9c6ff" stroke-width="0.96" stroke-linecap="round"/><path d="M0.5 15.5L4.5 17.5L8.5 15.5" fill="#e8d040"/><path d="M10 13.5L19.5 3.5L22 6L12.5 16Z" fill="#f0b030" stroke="#8a5a10" stroke-width="0.5"/><path d="M19.5 3.5L21 2L23.5 4.5L22 6Z" fill="#e02020"/><path d="M10 13.5L9.2 16.8L12.5 16Z" fill="#222"/><rect x="4.6" y="15.6" width="18.4" height="7.4" fill="#fff" stroke="#2a189a" stroke-width="1.4"/><text x="13.8" y="21.6" font-size="5.6" font-weight="bold" font-family="Liberation Sans, sans-serif" fill="#111" text-anchor="middle" textLength="13">ABC</text></svg>
<svg class="a" style="left:691.5px;top:254px;" width="26" height="25" viewBox="0 0 26 25"><path d="M1 24L23 0.5" stroke="#222" stroke-width="1.3"/><path d="M2 8Q9 0 17 8Q9 15 2 8Z" fill="none" stroke="#222" stroke-width="1"/><circle cx="9.5" cy="8" r="3.3" fill="none" stroke="#222" stroke-width="1"/><path d="M9 19Q16.5 11.5 25 19Q16.5 26 9 19Z" fill="#fff" stroke="#222" stroke-width="1"/><circle cx="17" cy="19" r="3.4" fill="#222"/></svg>
<svg class="a" style="left:693px;top:287px;" width="24" height="24" viewBox="0 0 24 24"><path d="M9 9L23 9L17 11.48L3 11.48Z" fill="#fff" stroke="#333" stroke-width="0.9"/><path d="M9 13L23 13L17 15.48L3 15.48Z" fill="#fff" stroke="#333" stroke-width="0.9"/><path d="M9 17L23 17L17 19.48L3 19.48Z" fill="#fff" stroke="#333" stroke-width="0.9"/><rect x="2" y="7" width="6" height="16.5" rx="1.5" fill="url(#gm)"/><ellipse cx="5" cy="8.08" rx="3" ry="1.32" fill="#6f86f4"/><path d="M2.9 12.1562L7.1 10.3" stroke="#b9c6ff" stroke-width="0.96" stroke-linecap="round"/><path d="M2.9 15.5312L7.1 13.675" stroke="#b9c6ff" stroke-width="0.96" stroke-linecap="round"/><path d="M2.9 18.9062L7.1 17.05" stroke="#b9c6ff" stroke-width="0.96" stroke-linecap="round"/><path d="M2.9 22.2812L7.1 20.425" stroke="#b9c6ff" stroke-width="0.96" stroke-linecap="round"/><path d="M8 5.5L14.4 8.1" stroke="#7f9fc0" stroke-width="0.8"/><path d="M8 5.5L10.1 10.6" stroke="#7f9fc0" stroke-width="0.8"/><path d="M8 5.5L5.4 11.9" stroke="#7f9fc0" stroke-width="0.8"/><path d="M8 5.5L2.9 7.6" stroke="#7f9fc0" stroke-width="0.8"/><path d="M8 5.5L1.6 2.9" stroke="#7f9fc0" stroke-width="0.8"/><path d="M8 5.5L5.9 0.4" stroke="#7f9fc0" stroke-width="0.8"/><path d="M8 5.5L10.6 -0.9" stroke="#7f9fc0" stroke-width="0.8"/><path d="M8 5.5L13.1 3.4" stroke="#7f9fc0" stroke-width="0.8"/><path d="M8.0 0.0L8.8 3.5L11.1 2.4L10.0 4.7L13.1 5.5L10.0 6.3L10.9 8.4L8.8 7.5L8.0 11.0L7.2 7.5L4.9 8.6L6.0 6.3L3.0 5.5L6.0 4.7L5.0 2.5L7.2 3.5Z" fill="#fff200" stroke="#e0d000" stroke-width="0.3"/></svg>
<svg class="a" style="left:692px;top:319px;" width="25" height="24" viewBox="0 0 25 24"><path d="M0.5 6H11.5V16.5H0.5Z" fill="url(#gsheet)" stroke="#3a3aa8" stroke-width="0.9"/><rect x="1.875" y="7.45833" width="1.68056" height="1.225" fill="#555"/><rect x="4.93056" y="7.45833" width="1.68056" height="1.225" fill="#555"/><rect x="7.98611" y="7.45833" width="1.68056" height="1.225" fill="#555"/><rect x="4.93056" y="10.375" width="1.68056" height="1.225" fill="#555"/><rect x="7.98611" y="10.375" width="1.68056" height="1.225" fill="#555"/><rect x="1.875" y="13.2917" width="1.68056" height="1.225" fill="#555"/><rect x="7.98611" y="13.2917" width="1.68056" height="1.225" fill="#555"/><path d="M8 12Q8 10.5 10 10.5H22.5V23H10Q8 23 8 21.5Z" fill="url(#gsheet)" stroke="#3a3aa8" stroke-width="0.9"/><rect x="10" y="13.5" width="1.6" height="1.5" fill="#444"/><rect x="13" y="13.5" width="1.6" height="1.5" fill="#444"/><rect x="16" y="13.5" width="1.6" height="1.5" fill="#444"/><rect x="19" y="13.5" width="1.6" height="1.5" fill="#444"/><rect x="10" y="16.1" width="1.6" height="1.5" fill="#444"/><rect x="13" y="16.1" width="1.6" height="1.5" fill="#444"/><rect x="16" y="16.1" width="1.6" height="1.5" fill="#444"/><rect x="19" y="16.1" width="1.6" height="1.5" fill="#444"/><rect x="10" y="18.7" width="1.6" height="1.5" fill="#444"/><rect x="13" y="18.7" width="1.6" height="1.5" fill="#444"/><rect x="16" y="18.7" width="1.6" height="1.5" fill="#444"/><rect x="19" y="18.7" width="1.6" height="1.5" fill="#444"/><rect x="10" y="21.3" width="1.6" height="1.5" fill="#444"/><rect x="13" y="21.3" width="1.6" height="1.5" fill="#444"/><rect x="16" y="21.3" width="1.6" height="1.5" fill="#444"/><rect x="19" y="21.3" width="1.6" height="1.5" fill="#444"/><path d="M16 6L22.4 8.6" stroke="#7f9fc0" stroke-width="0.8"/><path d="M16 6L18.1 11.1" stroke="#7f9fc0" stroke-width="0.8"/><path d="M16 6L13.4 12.4" stroke="#7f9fc0" stroke-width="0.8"/><path d="M16 6L10.9 8.1" stroke="#7f9fc0" stroke-width="0.8"/><path d="M16 6L9.6 3.4" stroke="#7f9fc0" stroke-width="0.8"/><path d="M16 6L13.9 0.9" stroke="#7f9fc0" stroke-width="0.8"/><path d="M16 6L18.6 -0.4" stroke="#7f9fc0" stroke-width="0.8"/><path d="M16 6L21.1 3.9" stroke="#7f9fc0" stroke-width="0.8"/><path d="M16.0 0.5L16.8 4.0L19.1 2.9L18.0 5.2L21.1 6.0L18.0 6.8L18.9 8.9L16.8 8.0L16.0 11.5L15.2 8.0L12.9 9.1L14.0 6.8L11.1 6.0L14.0 5.2L13.0 3.0L15.2 4.0Z" fill="#fff200" stroke="#e0d000" stroke-width="0.3"/></svg>
<svg class="a" style="left:692px;top:351px;" width="26" height="23" viewBox="0 0 26 23"><path d="M0.5 0.5H10V10.5H0.5Z" fill="url(#gsheet)" stroke="#3a3aa8" stroke-width="0.9"/><rect x="1.6875" y="1.88889" width="1.45139" height="1.16667" fill="#555"/><rect x="4.32639" y="1.88889" width="1.45139" height="1.16667" fill="#555"/><rect x="6.96528" y="1.88889" width="1.45139" height="1.16667" fill="#555"/><rect x="4.32639" y="4.66667" width="1.45139" height="1.16667" fill="#555"/><rect x="6.96528" y="4.66667" width="1.45139" height="1.16667" fill="#555"/><rect x="1.6875" y="7.44444" width="1.45139" height="1.16667" fill="#555"/><rect x="6.96528" y="7.44444" width="1.45139" height="1.16667" fill="#555"/><path d="M7 5.5H15V16.5H7Z" fill="url(#gsheet)" stroke="#3a3aa8" stroke-width="0.9"/><rect x="8.38462" y="6.69565" width="1.69231" height="1.00435" fill="#555"/><rect x="11.4615" y="6.69565" width="1.69231" height="1.00435" fill="#555"/><rect x="11.4615" y="9.08696" width="1.69231" height="1.00435" fill="#555"/><rect x="8.38462" y="11.4783" width="1.69231" height="1.00435" fill="#555"/><rect x="8.38462" y="13.8696" width="1.69231" height="1.00435" fill="#555"/><rect x="11.4615" y="13.8696" width="1.69231" height="1.00435" fill="#555"/><path d="M18.26 12.02V22.58M18.26 15.46H20.66M18.26 20.5H20.66" fill="none" stroke="#1a1aa0" stroke-width="1"/><rect x="16.5" y="8.5" width="3.52" height="3.52" fill="#fff04a" stroke="#1a1aa0" stroke-width="1"/><rect x="20.66" y="13.7" width="3.52" height="3.52" fill="#fff04a" stroke="#1a1aa0" stroke-width="1"/><rect x="20.66" y="18.74" width="3.52" height="3.52" fill="#fff04a" stroke="#1a1aa0" stroke-width="1"/></svg>
<svg class="a" style="left:692px;top:383px;" width="26" height="25" viewBox="0 0 26 25"><rect x="8.5" y="0.5" width="5" height="9" fill="url(#gsh)"/><g transform="rotate(8 4.5 16.25)"><path d="M1.56 10H7.44V20L4.5 22.5L1.56 20Z" fill="url(#gm)"/><path d="M1.56 15.25L7.44 11L7.44 13.75L1.56 18.25Z" fill="#e4e9ff"/><path d="M3.1 20.75L7.44 16.875L7.44 19.25L4.5 22.25Z" fill="#c9d2ff"/><ellipse cx="4.5" cy="10" rx="2.94" ry="0.98" fill="#7f93f6"/></g><path d="M6.775 6.5L11.45 6.5L11.45 10.75L9.75 12.45L5.5 12.45L5.5 7.775Z" fill="url(#gins)" stroke="#a04800" stroke-width="0.6"/><circle cx="8.475" cy="9.56" r="0.8075" fill="#111"/><path d="M17.26 12.52V23.08M17.26 15.96H19.66M17.26 21H19.66" fill="none" stroke="#1a1aa0" stroke-width="1"/><rect x="15.5" y="9" width="3.52" height="3.52" fill="#fff04a" stroke="#1a1aa0" stroke-width="1"/><rect x="19.66" y="14.2" width="3.52" height="3.52" fill="#fff04a" stroke="#1a1aa0" stroke-width="1"/><rect x="19.66" y="19.24" width="3.52" height="3.52" fill="#fff04a" stroke="#1a1aa0" stroke-width="1"/></svg>
<svg class="a" style="left:692.5px;top:413.5px;" width="10" height="10" viewBox="0 0 10 10"><path d="M5 0V10M0 5H10" stroke="#18889c" stroke-width="1.2"/></svg>
<svg class="a" style="left:702.5px;top:425.5px;" width="14" height="14" viewBox="0 0 14 14"><circle cx="7" cy="7" r="6.2" fill="#fff" stroke="#222" stroke-width="1"/><path d="M7 6V10.6" stroke="#222" stroke-width="1.2"/><circle cx="7" cy="3.9" r="0.8" fill="#222"/></svg>
<svg class="a" style="left:692px;top:447px;" width="25" height="24" viewBox="0 0 25 24"><rect x="14" y="0.5" width="7.5" height="13" fill="url(#gsh)"/><g transform="rotate(8 5.5 15.75)"><path d="M2.14 8.5H8.86V20.1L5.5 23L2.14 20.1Z" fill="url(#gm)"/><path d="M2.14 14.59L8.86 9.66L8.86 12.85L2.14 18.07Z" fill="#e4e9ff"/><path d="M3.9 20.97L8.86 16.475L8.86 19.23L5.5 22.71Z" fill="#c9d2ff"/><ellipse cx="5.5" cy="8.5" rx="3.36" ry="1.12" fill="#7f93f6"/></g><path d="M12 8.5L17.5 8.5L17.5 13.5L15.5 15.5L10.5 15.5L10.5 10Z" fill="url(#gins)" stroke="#a04800" stroke-width="0.6"/><circle cx="14" cy="12.1" r="0.95" fill="#111"/><path d="M7.5 6L13.9 8.6" stroke="#7f9fc0" stroke-width="0.8"/><path d="M7.5 6L9.6 11.1" stroke="#7f9fc0" stroke-width="0.8"/><path d="M7.5 6L4.9 12.4" stroke="#7f9fc0" stroke-width="0.8"/><path d="M7.5 6L2.4 8.1" stroke="#7f9fc0" stroke-width="0.8"/><path d="M7.5 6L1.1 3.4" stroke="#7f9fc0" stroke-width="0.8"/><path d="M7.5 6L5.4 0.9" stroke="#7f9fc0" stroke-width="0.8"/><path d="M7.5 6L10.1 -0.4" stroke="#7f9fc0" stroke-width="0.8"/><path d="M7.5 6L12.6 3.9" stroke="#7f9fc0" stroke-width="0.8"/><path d="M7.5 0.5L8.3 4.0L10.6 2.9L9.5 5.2L12.6 6.0L9.5 6.8L10.4 8.9L8.3 8.0L7.5 11.5L6.7 8.0L4.4 9.1L5.5 6.8L2.5 6.0L5.5 5.2L4.5 3.0L6.7 4.0Z" fill="#fff200" stroke="#e0d000" stroke-width="0.3"/></svg>
<svg class="a" style="left:692px;top:479px;" width="26" height="25" viewBox="0 0 26 25"><path d="M1 6L10 1.5L19 6L10 10.5Z" fill="#fff" stroke="#222" stroke-width="1"/><path d="M1 10L10 5.5L19 10L10 14.5Z" fill="#fff" stroke="#222" stroke-width="1"/><path d="M1 14L10 9.5L19 14L10 18.5Z" fill="#fff" stroke="#222" stroke-width="1"/><circle cx="17.5" cy="17" r="5.2" fill="#fff" stroke="#222" stroke-width="2.6" stroke-dasharray="2.2 1.9"/><circle cx="17.5" cy="17" r="4.2" fill="#fff" stroke="#222" stroke-width="1"/><circle cx="17.5" cy="17" r="1.7" fill="#fff" stroke="#222" stroke-width="1"/></svg>
<svg class="a" style="left:60px;top:253px;" width="14" height="13" viewBox="0 0 14 13"><path d="M0.5 1.5H5L6 3H13.5V12.5H0.5Z" fill="#f8e488" stroke="#8a7420" stroke-width="0.9"/><path d="M0.5 4.5H13.5" stroke="#d8c050" stroke-width="0.7"/><path d="M11.5 5.5H7.5V8H11.5V10.8H7.5" fill="none" stroke="#1818d8" stroke-width="1.3"/></svg>
<svg class="a" style="left:76px;top:273px;" width="14" height="13" viewBox="0 0 14 13"><path d="M0.5 1.5H5L6 3H13.5V12.5H0.5Z" fill="#f8e488" stroke="#8a7420" stroke-width="0.9"/><path d="M0.5 4.5H13.5" stroke="#d8c050" stroke-width="0.7"/><path d="M11.5 5.5H7.5V8H11.5V10.8H7.5" fill="none" stroke="#1818d8" stroke-width="1.3"/></svg>
<svg class="a" style="left:75px;top:290.5px;" width="16" height="17" viewBox="0 0 16 17"><path d="M0.6 1H3V14H15V16.4H0.6Z" fill="#fff" stroke="#555" stroke-width="0.8"/><path d="M3.8 1V12.6H15" fill="none" stroke="#111" stroke-width="1.3"/><rect x="7.5" y="0" width="3.6" height="8.5" rx="0.9" fill="url(#gm)"/><ellipse cx="9.3" cy="0.648" rx="1.8" ry="0.792" fill="#6f86f4"/><path d="M8.04 3.20833L10.56 1.98" stroke="#b9c6ff" stroke-width="0.8" stroke-linecap="round"/><path d="M8.04 5.44167L10.56 4.21333" stroke="#b9c6ff" stroke-width="0.8" stroke-linecap="round"/><path d="M8.04 7.675L10.56 6.44667" stroke="#b9c6ff" stroke-width="0.8" stroke-linecap="round"/><path d="M6 5H13.5M6 8.5H14" stroke="#2838d0" stroke-width="1"/></svg>
<svg class="a" style="left:75px;top:310.5px;" width="16" height="17" viewBox="0 0 16 17"><path d="M2 8Q1 12 3.5 13.5Q6 12.5 7 14.5Q10 13 13 12.5Q15 10 13.5 7Q11 3.5 7.5 4Z" fill="#fff" stroke="#111" stroke-width="1.1"/><g transform="rotate(-32 6 6)"><rect x="4" y="0" width="3.8" height="10" rx="0.95" fill="url(#gm)"/><ellipse cx="5.9" cy="0.684" rx="1.9" ry="0.836" fill="#6f86f4"/><path d="M4.57 3.575L7.23 2.09" stroke="#b9c6ff" stroke-width="0.8" stroke-linecap="round"/><path d="M4.57 6.275L7.23 4.79" stroke="#b9c6ff" stroke-width="0.8" stroke-linecap="round"/><path d="M4.57 8.975L7.23 7.49" stroke="#b9c6ff" stroke-width="0.8" stroke-linecap="round"/></g></svg>
<svg class="a" style="left:75px;top:330.5px;" width="16" height="17" viewBox="0 0 16 17"><path d="M3 3.5H14L11 9.5Q12 12 15.5 12.5L14 16H0.6L1.5 12Q1 7 3 3.5Z" fill="#d8d8d8" stroke="#111" stroke-width="1"/><path d="M3 3.5Q1.5 7 2 12L5 11Q4.5 7 6 3.5Z" fill="#f4f4f4" stroke="#555" stroke-width="0.6"/><g transform="rotate(28 10 7)"><rect x="8" y="0.5" width="3.8" height="11.5" rx="0.95" fill="url(#gm)"/><ellipse cx="9.9" cy="1.184" rx="1.9" ry="0.836" fill="#6f86f4"/><path d="M8.57 4.35L11.23 2.59" stroke="#b9c6ff" stroke-width="0.8" stroke-linecap="round"/><path d="M8.57 7.55L11.23 5.79" stroke="#b9c6ff" stroke-width="0.8" stroke-linecap="round"/><path d="M8.57 10.75L11.23 8.99" stroke="#b9c6ff" stroke-width="0.8" stroke-linecap="round"/></g></svg>
<svg class="a" style="left:75px;top:350.5px;" width="16" height="17" viewBox="0 0 16 17"><path d="M3 3.5H14L11 9.5Q12 12 15.5 12.5L14 16H0.6L1.5 12Q1 7 3 3.5Z" fill="#d8d8d8" stroke="#111" stroke-width="1"/><path d="M3 3.5Q1.5 7 2 12L5 11Q4.5 7 6 3.5Z" fill="#f4f4f4" stroke="#555" stroke-width="0.6"/><g transform="rotate(28 10 7)"><rect x="8" y="0.5" width="3.8" height="11.5" rx="0.95" fill="url(#gm)"/><ellipse cx="9.9" cy="1.184" rx="1.9" ry="0.836" fill="#6f86f4"/><path d="M8.57 4.35L11.23 2.59" stroke="#b9c6ff" stroke-width="0.8" stroke-linecap="round"/><path d="M8.57 7.55L11.23 5.79" stroke="#b9c6ff" stroke-width="0.8" stroke-linecap="round"/><path d="M8.57 10.75L11.23 8.99" stroke="#b9c6ff" stroke-width="0.8" stroke-linecap="round"/></g></svg>
<svg class="a" style="left:260.5px;top:292px;" width="8" height="14" viewBox="0 0 8 14"><rect x="0.5" y="0" width="7" height="14" rx="1.75" fill="url(#gm)"/><ellipse cx="4" cy="1.26" rx="3.5" ry="1.54" fill="#6f86f4"/><path d="M1.55 5.29375L6.45 3.85" stroke="#b9c6ff" stroke-width="1.12" stroke-linecap="round"/><path d="M1.55 7.91875L6.45 6.475" stroke="#b9c6ff" stroke-width="1.12" stroke-linecap="round"/><path d="M1.55 10.5438L6.45 9.1" stroke="#b9c6ff" stroke-width="1.12" stroke-linecap="round"/><path d="M1.55 13.1688L6.45 11.725" stroke="#b9c6ff" stroke-width="1.12" stroke-linecap="round"/></svg>
<svg class="a" style="left:825px;top:180.5px;" width="14" height="16" viewBox="0 0 14 16"><g opacity="0.85"><path d="M4.5 13.5L8.2 15.0" stroke="#7f9fc0" stroke-width="0.8"/><path d="M4.5 13.5L5.8 16.4" stroke="#7f9fc0" stroke-width="0.8"/><path d="M4.5 13.5L3.0 17.2" stroke="#7f9fc0" stroke-width="0.8"/><path d="M4.5 13.5L1.6 14.8" stroke="#7f9fc0" stroke-width="0.8"/><path d="M4.5 13.5L0.8 12.0" stroke="#7f9fc0" stroke-width="0.8"/><path d="M4.5 13.5L3.2 10.6" stroke="#7f9fc0" stroke-width="0.8"/><path d="M4.5 13.5L6.0 9.8" stroke="#7f9fc0" stroke-width="0.8"/><path d="M4.5 13.5L7.4 12.2" stroke="#7f9fc0" stroke-width="0.8"/><path d="M4.5 10.3L5.0 12.3L6.3 11.7L5.7 13.0L7.4 13.5L5.7 14.0L6.2 15.2L5.0 14.7L4.5 16.7L4.0 14.7L2.7 15.3L3.3 14.0L1.6 13.5L3.3 13.0L2.7 11.7L4.0 12.3Z" fill="#fff200" stroke="#e0d000" stroke-width="0.3"/></g><rect x="2.5" y="0" width="4" height="12" rx="1" fill="url(#gm)"/><ellipse cx="4.5" cy="0.72" rx="2" ry="0.88" fill="#6f86f4"/><path d="M3.1 3.575L5.9 2.2" stroke="#b9c6ff" stroke-width="0.8" stroke-linecap="round"/><path d="M3.1 6.075L5.9 4.7" stroke="#b9c6ff" stroke-width="0.8" stroke-linecap="round"/><path d="M3.1 8.575L5.9 7.2" stroke="#b9c6ff" stroke-width="0.8" stroke-linecap="round"/><path d="M3.1 11.075L5.9 9.7" stroke="#b9c6ff" stroke-width="0.8" stroke-linecap="round"/><path d="M7.5 3.5H13.5L12 5.5H7.5M7.5 7H11.5" fill="none" stroke="#555" stroke-width="0.8"/></svg>
<svg class="a" style="left:930px;top:180.5px;" width="14" height="16" viewBox="0 0 14 16"><g opacity="0.85"><path d="M4.5 13.5L8.2 15.0" stroke="#7f9fc0" stroke-width="0.8"/><path d="M4.5 13.5L5.8 16.4" stroke="#7f9fc0" stroke-width="0.8"/><path d="M4.5 13.5L3.0 17.2" stroke="#7f9fc0" stroke-width="0.8"/><path d="M4.5 13.5L1.6 14.8" stroke="#7f9fc0" stroke-width="0.8"/><path d="M4.5 13.5L0.8 12.0" stroke="#7f9fc0" stroke-width="0.8"/><path d="M4.5 13.5L3.2 10.6" stroke="#7f9fc0" stroke-width="0.8"/><path d="M4.5 13.5L6.0 9.8" stroke="#7f9fc0" stroke-width="0.8"/><path d="M4.5 13.5L7.4 12.2" stroke="#7f9fc0" stroke-width="0.8"/><path d="M4.5 10.3L5.0 12.3L6.3 11.7L5.7 13.0L7.4 13.5L5.7 14.0L6.2 15.2L5.0 14.7L4.5 16.7L4.0 14.7L2.7 15.3L3.3 14.0L1.6 13.5L3.3 13.0L2.7 11.7L4.0 12.3Z" fill="#fff200" stroke="#e0d000" stroke-width="0.3"/></g><rect x="2.5" y="0" width="4" height="12" rx="1" fill="url(#gm)"/><ellipse cx="4.5" cy="0.72" rx="2" ry="0.88" fill="#6f86f4"/><path d="M3.1 3.575L5.9 2.2" stroke="#b9c6ff" stroke-width="0.8" stroke-linecap="round"/><path d="M3.1 6.075L5.9 4.7" stroke="#b9c6ff" stroke-width="0.8" stroke-linecap="round"/><path d="M3.1 8.575L5.9 7.2" stroke="#b9c6ff" stroke-width="0.8" stroke-linecap="round"/><path d="M3.1 11.075L5.9 9.7" stroke="#b9c6ff" stroke-width="0.8" stroke-linecap="round"/><path d="M7.5 3.5H13.5L12 5.5H7.5M7.5 7H11.5" fill="none" stroke="#555" stroke-width="0.8"/></svg>
<svg class="a" style="left:1093px;top:180.5px;" width="14" height="16" viewBox="0 0 14 16"><g opacity="0.85"><path d="M4.5 13.5L8.2 15.0" stroke="#7f9fc0" stroke-width="0.8"/><path d="M4.5 13.5L5.8 16.4" stroke="#7f9fc0" stroke-width="0.8"/><path d="M4.5 13.5L3.0 17.2" stroke="#7f9fc0" stroke-width="0.8"/><path d="M4.5 13.5L1.6 14.8" stroke="#7f9fc0" stroke-width="0.8"/><path d="M4.5 13.5L0.8 12.0" stroke="#7f9fc0" stroke-width="0.8"/><path d="M4.5 13.5L3.2 10.6" stroke="#7f9fc0" stroke-width="0.8"/><path d="M4.5 13.5L6.0 9.8" stroke="#7f9fc0" stroke-width="0.8"/><path d="M4.5 13.5L7.4 12.2" stroke="#7f9fc0" stroke-width="0.8"/><path d="M4.5 10.3L5.0 12.3L6.3 11.7L5.7 13.0L7.4 13.5L5.7 14.0L6.2 15.2L5.0 14.7L4.5 16.7L4.0 14.7L2.7 15.3L3.3 14.0L1.6 13.5L3.3 13.0L2.7 11.7L4.0 12.3Z" fill="#fff200" stroke="#e0d000" stroke-width="0.3"/></g><rect x="2.5" y="0" width="4" height="12" rx="1" fill="url(#gm)"/><ellipse cx="4.5" cy="0.72" rx="2" ry="0.88" fill="#6f86f4"/><path d="M3.1 3.575L5.9 2.2" stroke="#b9c6ff" stroke-width="0.8" stroke-linecap="round"/><path d="M3.1 6.075L5.9 4.7" stroke="#b9c6ff" stroke-width="0.8" stroke-linecap="round"/><path d="M3.1 8.575L5.9 7.2" stroke="#b9c6ff" stroke-width="0.8" stroke-linecap="round"/><path d="M3.1 11.075L5.9 9.7" stroke="#b9c6ff" stroke-width="0.8" stroke-linecap="round"/><path d="M7.5 3.5H13.5L12 5.5H7.5M7.5 7H11.5" fill="none" stroke="#555" stroke-width="0.8"/></svg>
<svg class="a" style="left:728px;top:179.5px;" width="16" height="17" viewBox="0 0 16 17"><path d="M0.8 8.5L8 1L15.2 8.5M2.8 7V16H6.5V11H9.5V16H13.2V7M11.5 4.5V1.8H13.2V6.2" fill="none" stroke="#222" stroke-width="1.1"/></svg>
<svg class="a" style="left:891.5px;top:184.5px;" width="10" height="11" viewBox="0 0 10 11"><path d="M5.5 1H2.2Q1 1 1 2.2V8.8Q1 10 2.2 10H7.3Q8.5 10 8.5 8.8V6.5" fill="none" stroke="#fff" stroke-width="1.3"/><path d="M4.2 6.3L8.6 1.9M5.9 1.2H9.3V4.6" fill="none" stroke="#fff" stroke-width="1.2"/></svg>
<svg class="a" style="left:1055px;top:184.5px;" width="10" height="11" viewBox="0 0 10 11"><path d="M5.5 1H2.2Q1 1 1 2.2V8.8Q1 10 2.2 10H7.3Q8.5 10 8.5 8.8V6.5" fill="none" stroke="#222" stroke-width="1.3"/><path d="M4.2 6.3L8.6 1.9M5.9 1.2H9.3V4.6" fill="none" stroke="#222" stroke-width="1.2"/></svg>
<svg class="a" style="left:1160px;top:184.5px;" width="10" height="11" viewBox="0 0 10 11"><path d="M5.5 1H2.2Q1 1 1 2.2V8.8Q1 10 2.2 10H7.3Q8.5 10 8.5 8.8V6.5" fill="none" stroke="#222" stroke-width="1.3"/><path d="M4.2 6.3L8.6 1.9M5.9 1.2H9.3V4.6" fill="none" stroke="#222" stroke-width="1.2"/></svg>
<svg class="a" style="left:908px;top:184.5px;" width="9" height="9" viewBox="0 0 9 9"><path d="M0.8 0.8L8.2 8.2M8.2 0.8L0.8 8.2" stroke="#fff" stroke-width="1.9"/></svg>
<svg class="a" style="left:723px;top:200px" width="1176" height="816" viewBox="723 200 1176 816"><defs><linearGradient id="gb" gradientUnits="userSpaceOnUse" x1="1399.7" y1="602.6" x2="1238.3" y2="831.4"><stop offset="0" stop-color="#6aaae6"/><stop offset="0.035" stop-color="#7dbdf5"/><stop offset="0.08" stop-color="#88cafd"/><stop offset="0.2" stop-color="#8ccfff"/><stop offset="0.40" stop-color="#9ad6ff"/><stop offset="0.47" stop-color="#8fc9f8"/><stop offset="0.57" stop-color="#6f9fd0"/><stop offset="0.69" stop-color="#4f78a4"/><stop offset="0.82" stop-color="#42628a"/><stop offset="0.93" stop-color="#395470"/><stop offset="1" stop-color="#2f445e"/></linearGradient><linearGradient id="gh" gradientUnits="userSpaceOnUse" x1="1379.5" y1="631.2" x2="1258.5" y2="802.8"><stop offset="0" stop-color="#36547a"/><stop offset="0.3" stop-color="#42658d"/><stop offset="0.5" stop-color="#6394c5"/><stop offset="0.66" stop-color="#94cefc"/><stop offset="0.86" stop-color="#9bd5ff"/><stop offset="1" stop-color="#82bcec"/></linearGradient></defs><path d="M1033.6 344.4 L1399.7 602.6 A140 51 -54.8 0 1 1238.3 831.4 L872.2 573.2 A140 51 -54.8 0 1 1033.6 344.4 Z" fill="url(#gb)" stroke="#22354a" stroke-width="0.9"/><ellipse cx="1319.0" cy="717.0" rx="140" ry="51" transform="rotate(-54.8 1319.0 717.0)" fill="#41607f" stroke="#1f2f42" stroke-width="0.9"/><ellipse cx="1319.0" cy="717.0" rx="105" ry="38.5" transform="rotate(-54.8 1319.0 717.0)" fill="#344d6a" stroke="#1f2f42" stroke-width="0.9"/><ellipse cx="1317.9" cy="717.5" rx="101.5" ry="35.6" transform="rotate(-54.8 1317.9 717.5)" fill="url(#gh)" stroke="#c8a658" stroke-width="1.5"/><defs><linearGradient id="gwd" gradientUnits="userSpaceOnUse" x1="1060" y1="380" x2="1270" y2="660"><stop offset="0" stop-color="#42648a"/><stop offset="0.55" stop-color="#4a6f98"/><stop offset="0.75" stop-color="#5d86b3"/><stop offset="1" stop-color="#7caddb"/></linearGradient><linearGradient id="gwl" gradientUnits="userSpaceOnUse" x1="1080" y1="500" x2="1200" y2="670"><stop offset="0" stop-color="#5f89b8"/><stop offset="0.4" stop-color="#86b8e8"/><stop offset="1" stop-color="#9fd4ff"/></linearGradient><linearGradient id="gfl" gradientUnits="userSpaceOnUse" x1="1120" y1="540" x2="1250" y2="660"><stop offset="0" stop-color="#6c94c3"/><stop offset="1" stop-color="#86b4e4"/></linearGradient><clipPath id="cs"><path d="M1026.3 387.2C1026.2 384.6 1026.7 382.4 1027.7 380.4C1028.7 378.4 1030.2 376.2 1032.5 375.1C1034.8 374.0 1037.7 373.4 1041.2 373.5C1044.8 373.6 1049.3 374.3 1053.8 375.6C1058.3 376.9 1063.5 379.0 1068.2 381.4C1072.9 383.8 1077.8 387.2 1081.7 390.1C1085.6 393.0 1088.0 395.3 1091.4 398.8C1094.8 402.3 1098.6 407.0 1102.0 411.3C1105.4 415.6 1108.5 420.0 1111.6 424.8C1114.7 429.6 1117.4 434.5 1120.5 440.0C1123.6 445.5 1126.8 451.9 1130.0 458.0C1133.2 464.1 1136.2 469.1 1140.0 476.6C1143.8 484.1 1148.4 494.1 1152.5 503.0C1156.6 511.9 1162.0 523.2 1164.8 530.0C1167.6 536.8 1167.6 538.8 1169.5 543.5C1171.4 548.2 1174.2 554.1 1176.0 558.4C1177.8 562.6 1179.1 566.2 1180.5 569.0C1181.9 571.8 1181.2 572.2 1184.5 575.0C1187.8 577.8 1193.1 580.5 1200.0 585.5C1206.9 590.5 1217.7 598.9 1226.0 605.0C1234.3 611.1 1243.5 617.3 1250.0 622.0C1256.5 626.7 1261.4 629.4 1265.2 633.0C1269.0 636.6 1271.2 640.2 1272.9 643.6C1274.6 647.0 1275.3 649.4 1275.3 653.2C1275.3 657.1 1274.6 662.2 1272.9 666.7C1271.2 671.2 1268.6 676.5 1265.2 680.2C1261.8 683.9 1256.9 686.9 1252.7 688.9C1248.5 690.9 1244.1 692.1 1240.1 692.3C1236.1 692.5 1232.9 691.8 1228.6 689.9C1224.3 688.0 1220.5 685.4 1214.1 681.2C1207.7 677.0 1199.0 671.2 1190.0 664.8C1181.0 658.4 1168.8 649.3 1160.0 643.0C1151.2 636.7 1141.9 630.8 1137.0 627.0C1132.1 623.2 1132.3 623.0 1130.5 620.5C1128.7 618.0 1128.2 616.8 1126.0 612.0C1123.8 607.2 1120.5 599.3 1117.0 592.0C1113.5 584.7 1109.5 576.7 1105.0 568.0C1100.5 559.3 1094.9 550.5 1090.1 540.0C1085.3 529.5 1080.8 517.5 1076.0 505.0C1071.2 492.5 1065.0 474.5 1061.5 465.0C1058.0 455.5 1057.1 453.6 1054.7 447.9C1052.3 442.2 1049.6 436.1 1047.0 430.6C1044.4 425.1 1041.7 419.6 1039.3 415.1C1036.9 410.6 1034.3 406.8 1032.5 403.6C1030.7 400.4 1029.2 398.6 1028.2 395.9C1027.2 393.2 1026.4 389.8 1026.3 387.2Z"/></clipPath><clipPath id="cc"><path d="M1035.4 404.5C1035.5 400.6 1038.8 395.4 1040.3 392.0C1041.8 388.6 1042.3 386.1 1044.1 384.3C1045.9 382.5 1048.2 381.7 1050.9 381.4C1053.6 381.1 1057.3 381.4 1060.5 382.4C1063.7 383.4 1066.9 384.9 1070.1 387.2C1073.3 389.4 1076.9 392.8 1079.8 395.9C1082.7 398.9 1084.6 401.3 1087.5 405.5C1090.4 409.7 1093.9 415.4 1097.1 420.9C1100.3 426.4 1103.6 432.2 1106.8 438.3C1110.0 444.4 1112.9 449.5 1116.4 457.6C1119.9 465.7 1124.1 477.6 1128.0 487.0C1131.9 496.4 1136.9 506.8 1140.0 514.0C1143.1 521.2 1144.3 524.5 1146.6 530.0C1148.9 535.5 1151.6 541.5 1154.0 546.9C1156.4 552.3 1158.5 557.1 1160.8 562.4C1163.0 567.7 1165.2 574.2 1167.5 578.6C1169.8 583.0 1168.9 583.9 1174.3 588.5C1179.7 593.1 1190.7 600.0 1200.0 606.5C1209.3 613.0 1221.7 622.1 1230.0 627.5C1238.3 632.9 1244.9 635.5 1249.8 638.8C1254.7 642.0 1256.7 643.9 1259.4 647.0C1262.1 650.1 1264.6 654.2 1266.2 657.5C1267.8 660.8 1269.0 663.5 1269.0 666.7C1269.0 670.0 1267.8 674.3 1266.2 677.0C1264.6 679.7 1262.5 682.0 1259.4 683.0C1256.4 684.0 1252.5 683.9 1247.9 683.0C1243.3 682.1 1238.0 680.4 1232.0 677.5C1226.0 674.6 1219.3 670.2 1212.0 665.5C1204.7 660.8 1196.2 655.2 1188.0 649.5C1179.8 643.8 1171.0 636.9 1163.0 631.0C1155.0 625.1 1145.2 618.8 1140.0 614.0C1134.8 609.2 1134.3 607.2 1132.0 602.0C1129.7 596.8 1128.0 589.4 1126.0 583.0C1124.0 576.6 1123.5 571.0 1120.3 563.8C1117.0 556.6 1112.4 549.8 1106.5 540.0C1100.6 530.2 1092.2 516.9 1085.0 505.0C1077.8 493.1 1068.2 478.4 1063.2 468.9C1058.2 459.4 1057.8 454.3 1055.2 447.9C1052.6 441.5 1050.1 436.1 1047.5 430.6C1044.9 425.1 1041.8 419.5 1039.8 415.1C1037.8 410.8 1035.3 408.4 1035.4 404.5Z"/></clipPath></defs><path d="M1026.3 387.2C1026.2 384.6 1026.7 382.4 1027.7 380.4C1028.7 378.4 1030.2 376.2 1032.5 375.1C1034.8 374.0 1037.7 373.4 1041.2 373.5C1044.8 373.6 1049.3 374.3 1053.8 375.6C1058.3 376.9 1063.5 379.0 1068.2 381.4C1072.9 383.8 1077.8 387.2 1081.7 390.1C1085.6 393.0 1088.0 395.3 1091.4 398.8C1094.8 402.3 1098.6 407.0 1102.0 411.3C1105.4 415.6 1108.5 420.0 1111.6 424.8C1114.7 429.6 1117.4 434.5 1120.5 440.0C1123.6 445.5 1126.8 451.9 1130.0 458.0C1133.2 464.1 1136.2 469.1 1140.0 476.6C1143.8 484.1 1148.4 494.1 1152.5 503.0C1156.6 511.9 1162.0 523.2 1164.8 530.0C1167.6 536.8 1167.6 538.8 1169.5 543.5C1171.4 548.2 1174.2 554.1 1176.0 558.4C1177.8 562.6 1179.1 566.2 1180.5 569.0C1181.9 571.8 1181.2 572.2 1184.5 575.0C1187.8 577.8 1193.1 580.5 1200.0 585.5C1206.9 590.5 1217.7 598.9 1226.0 605.0C1234.3 611.1 1243.5 617.3 1250.0 622.0C1256.5 626.7 1261.4 629.4 1265.2 633.0C1269.0 636.6 1271.2 640.2 1272.9 643.6C1274.6 647.0 1275.3 649.4 1275.3 653.2C1275.3 657.1 1274.6 662.2 1272.9 666.7C1271.2 671.2 1268.6 676.5 1265.2 680.2C1261.8 683.9 1256.9 686.9 1252.7 688.9C1248.5 690.9 1244.1 692.1 1240.1 692.3C1236.1 692.5 1232.9 691.8 1228.6 689.9C1224.3 688.0 1220.5 685.4 1214.1 681.2C1207.7 677.0 1199.0 671.2 1190.0 664.8C1181.0 658.4 1168.8 649.3 1160.0 643.0C1151.2 636.7 1141.9 630.8 1137.0 627.0C1132.1 623.2 1132.3 623.0 1130.5 620.5C1128.7 618.0 1128.2 616.8 1126.0 612.0C1123.8 607.2 1120.5 599.3 1117.0 592.0C1113.5 584.7 1109.5 576.7 1105.0 568.0C1100.5 559.3 1094.9 550.5 1090.1 540.0C1085.3 529.5 1080.8 517.5 1076.0 505.0C1071.2 492.5 1065.0 474.5 1061.5 465.0C1058.0 455.5 1057.1 453.6 1054.7 447.9C1052.3 442.2 1049.6 436.1 1047.0 430.6C1044.4 425.1 1041.7 419.6 1039.3 415.1C1036.9 410.6 1034.3 406.8 1032.5 403.6C1030.7 400.4 1029.2 398.6 1028.2 395.9C1027.2 393.2 1026.4 389.8 1026.3 387.2Z" fill="url(#gwd)" stroke="#1f2f42" stroke-width="0.9"/><path d="M1061.5 465.0L1076.0 505.0L1090.1 540.0L1105.0 568.0L1117.0 592.0L1126.0 612.0L1130.5 620.5L1137.0 627.0L1160.0 643.0L1190.0 664.8L1214.1 681.2L1228.6 689.9L1240.1 692.3L1252.7 688.9L1262.0 683.0L1250.0 684.0L1232.0 677.0L1212.0 665.0L1188.0 649.0L1163.0 630.5L1140.0 613.5L1132.0 601.5L1126.0 583.0L1120.3 563.8L1106.5 540.0L1085.0 505.0L1063.2 468.9Z" fill="url(#gwl)" clip-path="url(#cs)"/><path d="M1123.9 473.7C1126.6 478.4 1135.2 492.1 1140.0 501.7C1144.8 511.2 1149.2 522.1 1153.0 531.0C1156.8 539.9 1160.0 548.0 1163.0 555.0C1166.0 562.0 1168.5 568.7 1171.0 573.0C1173.5 577.3 1176.8 579.7 1178.0 581.0" fill="none" stroke="#2a3d55" stroke-width="0.6" clip-path="url(#cs)"/><path d="M1035.4 404.5C1035.5 400.6 1038.8 395.4 1040.3 392.0C1041.8 388.6 1042.3 386.1 1044.1 384.3C1045.9 382.5 1048.2 381.7 1050.9 381.4C1053.6 381.1 1057.3 381.4 1060.5 382.4C1063.7 383.4 1066.9 384.9 1070.1 387.2C1073.3 389.4 1076.9 392.8 1079.8 395.9C1082.7 398.9 1084.6 401.3 1087.5 405.5C1090.4 409.7 1093.9 415.4 1097.1 420.9C1100.3 426.4 1103.6 432.2 1106.8 438.3C1110.0 444.4 1112.9 449.5 1116.4 457.6C1119.9 465.7 1124.1 477.6 1128.0 487.0C1131.9 496.4 1136.9 506.8 1140.0 514.0C1143.1 521.2 1144.3 524.5 1146.6 530.0C1148.9 535.5 1151.6 541.5 1154.0 546.9C1156.4 552.3 1158.5 557.1 1160.8 562.4C1163.0 567.7 1165.2 574.2 1167.5 578.6C1169.8 583.0 1168.9 583.9 1174.3 588.5C1179.7 593.1 1190.7 600.0 1200.0 606.5C1209.3 613.0 1221.7 622.1 1230.0 627.5C1238.3 632.9 1244.9 635.5 1249.8 638.8C1254.7 642.0 1256.7 643.9 1259.4 647.0C1262.1 650.1 1264.6 654.2 1266.2 657.5C1267.8 660.8 1269.0 663.5 1269.0 666.7C1269.0 670.0 1267.8 674.3 1266.2 677.0C1264.6 679.7 1262.5 682.0 1259.4 683.0C1256.4 684.0 1252.5 683.9 1247.9 683.0C1243.3 682.1 1238.0 680.4 1232.0 677.5C1226.0 674.6 1219.3 670.2 1212.0 665.5C1204.7 660.8 1196.2 655.2 1188.0 649.5C1179.8 643.8 1171.0 636.9 1163.0 631.0C1155.0 625.1 1145.2 618.8 1140.0 614.0C1134.8 609.2 1134.3 607.2 1132.0 602.0C1129.7 596.8 1128.0 589.4 1126.0 583.0C1124.0 576.6 1123.5 571.0 1120.3 563.8C1117.0 556.6 1112.4 549.8 1106.5 540.0C1100.6 530.2 1092.2 516.9 1085.0 505.0C1077.8 493.1 1068.2 478.4 1063.2 468.9C1058.2 459.4 1057.8 454.3 1055.2 447.9C1052.6 441.5 1050.1 436.1 1047.5 430.6C1044.9 425.1 1041.8 419.5 1039.8 415.1C1037.8 410.8 1035.3 408.4 1035.4 404.5Z" fill="#00ffff"/><g clip-path="url(#cc)" fill="none" stroke-linejoin="round" stroke-linecap="round"><path d="M1138.0 546.0C1139.2 548.0 1142.7 553.8 1145.0 558.0C1147.3 562.2 1149.7 566.5 1152.0 571.0C1154.3 575.5 1156.5 580.7 1159.0 585.0C1161.5 589.3 1164.2 593.6 1167.0 597.0C1169.8 600.4 1172.2 602.3 1176.0 605.5C1179.8 608.7 1182.8 611.2 1190.0 616.0C1197.2 620.8 1209.5 628.3 1219.0 634.5C1228.5 640.7 1241.2 649.0 1247.0 653.3C1252.8 657.5 1252.4 658.9 1253.5 660.0" stroke="url(#gfl)" stroke-width="4.8"/><path d="M1135.0 569.0C1136.2 571.7 1139.5 580.1 1142.0 585.0C1144.5 589.9 1147.2 594.5 1150.0 598.5C1152.8 602.5 1155.5 605.8 1159.0 609.0C1162.5 612.2 1165.8 614.3 1171.0 617.5C1176.2 620.7 1182.0 623.4 1190.0 628.3C1198.0 633.2 1211.0 641.6 1219.0 647.0C1227.0 652.4 1234.8 658.2 1238.0 660.5" stroke="#9cc0f4" stroke-width="4"/><path d="M1126.0 563.0C1127.1 566.2 1130.2 576.1 1132.5 582.0C1134.8 587.9 1137.2 593.6 1140.0 598.5C1142.8 603.4 1145.3 607.8 1149.0 611.5C1152.7 615.2 1155.2 616.5 1162.0 621.0C1168.8 625.5 1180.5 632.0 1190.0 638.2C1199.5 644.5 1210.7 652.7 1219.0 658.5C1227.3 664.3 1236.5 670.6 1240.0 673.0" stroke="#96cffe" stroke-width="4.4"/><path d="M1119.6 556.0L1127.0 553.5L1135.0 576.0L1130.0 579.0Z" fill="#7099c8" stroke="none"/><path d="M1094.0 498.8L1097.0 501.5L1109.4 526.8L1116.4 535.5L1110.4 538.0L1101.7 517.1Z" fill="#6c94c3" stroke="none"/></g><path d="M1047.0 412.0C1046.8 409.3 1045.2 400.0 1046.0 396.0C1046.8 392.0 1049.3 389.1 1052.0 388.0C1054.7 386.9 1058.3 387.8 1062.0 389.5C1065.7 391.2 1070.0 393.9 1074.0 398.0C1078.0 402.1 1082.0 407.7 1086.0 414.0C1090.0 420.3 1094.0 428.0 1098.0 436.0C1102.0 444.0 1108.0 457.7 1110.0 462.0" fill="none" stroke="#00cfe6" stroke-width="0.7"/><path d="M1052.0 410.4C1051.9 407.8 1050.8 398.6 1051.5 394.9C1052.2 391.2 1054.4 388.5 1056.4 388.0C1058.4 387.5 1060.7 389.3 1063.7 391.7C1066.6 394.1 1070.5 397.8 1074.0 402.4C1077.5 407.0 1081.3 413.0 1084.9 419.5C1088.5 426.0 1092.1 433.5 1095.8 441.5C1099.5 449.5 1105.3 463.2 1107.2 467.5" fill="none" stroke="#00cfe6" stroke-width="0.7"/><path d="M1056.9 408.7C1056.9 406.2 1056.3 397.2 1057.0 393.8C1057.7 390.4 1059.4 388.0 1060.8 388.0C1062.2 388.0 1063.1 390.8 1065.3 393.9C1067.5 397.0 1070.9 401.6 1074.0 406.8C1077.1 412.0 1080.5 418.3 1083.8 425.0C1087.1 431.7 1090.1 439.0 1093.6 447.0C1097.0 455.0 1102.7 468.7 1104.5 473.0" fill="none" stroke="#00cfe6" stroke-width="0.7"/><path d="M1103.1 479.9L1105.6 479.9L1110.9 488.6L1116.2 497.7L1121.9 507.4L1125.3 517.0L1129.7 526.7L1133.0 534.9L1137.9 545.9L1135.9 544.5L1130.6 533.7L1122.9 526.7L1115.2 517.0L1106.5 507.4L1103.6 497.7Z" fill="#0000e6"/><path d="M1101.6 466.5l1.6 0M1101.9 469.3l1.7 0M1102.2 472.1l1.9 0M1102.6 474.8l2 0" stroke="#0000e6" stroke-width="1.3"/><path d="M1108.0 504.5L1111.3 504.5L1114.2 513.2L1117.1 522.3L1117.8 532.0L1117.4 536.3L1113.8 534.9L1110.4 526.7L1108.0 517.0Z" fill="#f6b400"/><path d="M1118.6 533.7L1130.1 532.0L1133.8 552.2L1122.7 554.1Z" fill="#f6d6e2"/><path d="M1116.2 520.4L1134.5 568.6" stroke="#d9d3c4" stroke-width="1.2" fill="none"/><path d="M1135.0 571.0L1141.7 577.3L1146.5 600.9L1139.3 591.0L1134.5 581.4Z" fill="#1e9fda"/><path d="M1135.0 571.0L1137.9 575.4L1144.6 597.1L1139.3 591.0L1134.5 581.4Z" fill="#1478ae"/><path d="M1254 670.5L1319 717" stroke="#f0a8a0" stroke-width="1.1"/><path d="M1319.0 717.0L1300.5 699.8L1290.5 696.3L1296.5 705.0Z" fill="#f23a3a"/><path d="M1280.0 689.5L1292.8 693.2L1288.3 700.2Z" fill="#f4b0a8"/><path d="M1239.0 661.5L1258.2 667.0L1252.3 675.8Z" fill="#f4b0a8"/><path d="M1258.2 667.0L1252.3 675.8L1256.5 674.5L1259.0 669.5Z" fill="#e89088"/><path d="M1319.0 717.0L1332.8 677.6L1333.8 664.4L1327.8 676.1Z" fill="#1030e0"/><path d="M1319.0 717.0L1336.3 655.6" stroke="#1030e0" stroke-width="0.8"/><path d="M1339.5 644.0L1339.5 656.5L1333.0 654.6Z" fill="#1030e0"/><path d="M1319.0 717.0L1282.7 740.3L1273.6 750.5L1286.0 744.8Z" fill="#2fb52f"/><path d="M1319.0 717.0L1266.5 755.8" stroke="#2fb52f" stroke-width="0.8"/><path d="M1256.0 763.5L1264.3 752.9L1268.6 758.7Z" fill="#2fb52f"/><text x="1241" y="657" font-family="Liberation Sans, sans-serif" font-size="13" fill="#e04848">XM</text><text x="1277" y="681.5" font-family="Liberation Sans, sans-serif" font-size="13" fill="#e03030">XC</text><text x="1320" y="641" font-family="Liberation Sans, sans-serif" font-size="13" fill="#1a3cf0">ZM</text><text x="1312" y="676" font-family="Liberation Sans, sans-serif" font-size="13" fill="#2050f0">ZC</text><text x="1286" y="757.5" font-family="Liberation Sans, sans-serif" font-size="13" fill="#2f9f3f">YC</text><text x="1257" y="778" font-family="Liberation Sans, sans-serif" font-size="13" fill="#2f9f3f">YM</text><path d="M788.5 904.0L808.5 918.0L805.5 936.5L787.5 947.5L767.5 934.0L772.0 916.5Z" fill="#a9bcc8" opacity="0.92"/><path d="M772 916.5L788 925.5L808.5 918M788 925.5L787.5 947.5" fill="none" stroke="#c0c4c8" stroke-width="0.7" opacity="0.8"/><path d="M787.5 948L753 926.5" stroke="#e8404a" stroke-width="2"/><path d="M751.5 925.5L762.0 927.0L758.5 933.0Z" fill="#e8404a"/><path d="M787.5 948L815 931.5" stroke="#1a5cff" stroke-width="2"/><path d="M817.5 930.0L807.5 931.5L810.5 937.0Z" fill="#1a5cff"/><path d="M788.5 946L795 920" stroke="#1f7a2c" stroke-width="3"/><path d="M797.0 913.0L799.0 927.0L790.5 925.0Z" fill="#1f7a2c"/><circle cx="787.5" cy="949.5" r="4.4" fill="#e4e4e4"/><circle cx="786.5" cy="948.3" r="1.8" fill="#fff"/><text x="746" y="929" font-family="Liberation Sans, sans-serif" font-size="11" fill="#d8485a">X</text><text x="794" y="918.5" font-family="Liberation Sans, sans-serif" font-size="11" fill="#3fae4f">Y</text><text x="813" y="931" font-family="Liberation Sans, sans-serif" font-size="11" fill="#1a6cff">Z</text><g opacity="0.52"><path d="M1652.0 941.8L1687.5 962.3L1687.5 1003.3L1652.0 1023.8L1616.5 1003.3L1616.5 962.3Z" fill="rgb(30,110,165)"/><path d="M1652.0 941.9L1665.8 949.9Q1673.4 959.7 1671.5 971.4L1652.0 960.1Q1642.8 955.3 1630.6 954.3Z" fill="rgb(187,230,255)"/><path d="M1687.4 962.4L1687.3 978.3Q1682.7 989.8 1671.7 994.0L1671.7 971.5Q1671.2 961.2 1666.0 950.0Z" fill="rgb(48,181,255)"/><path d="M1687.4 1003.3L1673.5 1011.2Q1661.3 1012.9 1652.1 1005.5L1671.7 994.2Q1680.3 988.6 1687.4 978.6Z" fill="rgb(7,156,239)"/><path d="M1652.0 1023.7L1638.2 1015.7Q1630.6 1006.0 1632.4 994.3L1652.0 1005.6Q1661.1 1010.3 1673.4 1011.4Z" fill="rgb(7,158,243)"/><path d="M1616.6 1003.3L1616.6 987.3Q1621.2 975.9 1632.2 971.6L1632.3 994.2Q1632.7 1004.5 1637.9 1015.6Z" fill="rgb(89,185,248)"/><path d="M1616.6 962.4L1630.4 954.4Q1642.6 952.7 1651.8 960.1L1632.3 971.5Q1623.6 977.0 1616.5 987.1Z" fill="rgb(121,200,252)"/><path d="M1652.0 964.8L1667.6 973.8L1652.0 982.8L1636.4 973.8Z" fill="rgb(129,210,255)"/><path d="M1636.4 973.8L1652.0 982.8L1652.0 1000.8L1636.4 991.8Z" fill="rgb(79,187,248)"/><path d="M1652.0 982.8L1667.6 973.8L1667.6 991.8L1652.0 1000.8Z" fill="rgb(7,156,239)"/></g><text x="1696" y="991.4" font-family="Liberation Sans, sans-serif" font-weight="bold" font-size="48" fill="#8fb6d0" textLength="59.5" lengthAdjust="spacingAndGlyphs">3D</text><g fill="none" stroke="#8fb6d0" stroke-width="5.2"><path d="M1760 968.5H1796.5M1767.5 957V989.5H1795M1780.5 957V983M1788.5 957V983M1780.5 980.5H1788.5"/></g><g fill="none" stroke="#8fb6d0" stroke-width="4"><path d="M1808.5 959.5H1830V973.5H1808.5ZM1808.5 966.5H1830M1819.2 959.5V973.5"/><path d="M1800 982.5L1819.2 974.5L1835.5 982.5" stroke-width="4.6"/><path d="M1814 979.5C1814 986 1810 990 1803 991" stroke-width="4.4"/><path d="M1825 979.5V992" stroke-width="4.6"/></g><g fill="none" stroke="#8fb6d0" stroke-width="4.2"><path d="M1844.5 957.5V992M1844.5 959.8H1869.5V987Q1869.5 990 1863 990"/><path d="M1849 964.5L1856.5 985.5M1856.5 964.5L1849 985.5M1858.5 964.5L1866 985.5M1866 964.5L1858.5 985.5" stroke-width="3.4"/></g><text x="1698" y="1010" font-family="Liberation Sans, sans-serif" font-size="12.4" fill="#8fb6d0" textLength="173.5" lengthAdjust="spacingAndGlyphs">WWW.3DSJW.COM</text></svg>
</body></html>
